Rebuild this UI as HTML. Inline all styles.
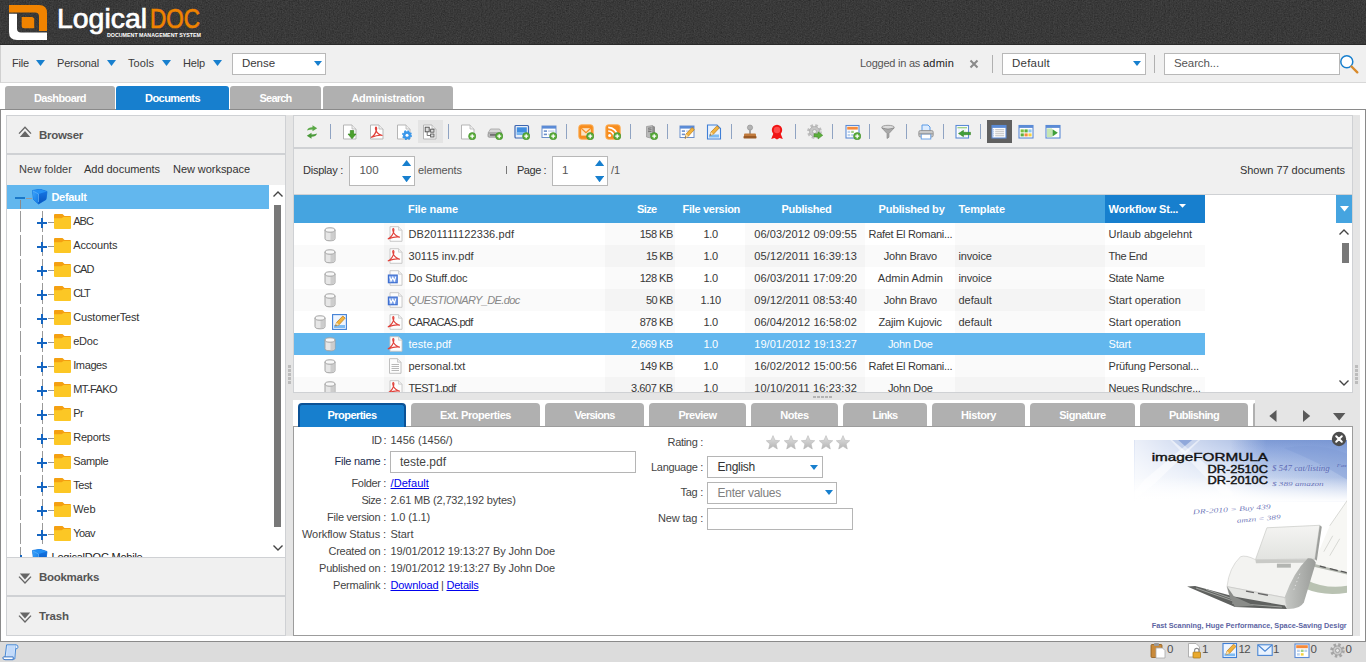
<!DOCTYPE html>
<html lang="en"><head><meta charset="utf-8"><title>LogicalDOC</title>
<style>
html,body{margin:0;padding:0;}
body{width:1366px;height:662px;overflow:hidden;background:#fff;position:relative;font-family:"Liberation Sans",sans-serif;font-size:11px;}
.a{position:absolute;box-sizing:border-box;display:block;}
.t{position:absolute;white-space:nowrap;line-height:16px;height:16px;}
a.t,.t a{color:#0000ee;text-decoration:underline;}
</style></head><body>
<div class="a" style="left:0px;top:0px;width:1366px;height:45px;background:#434343;border-bottom:1px solid #2a2a2a;"></div>
<svg class="a" style="left:0px;top:0px;" width="1366" height="44" viewBox="0 0 1366 44"><defs><filter id="hn" x="0" y="0" width="100%" height="100%"><feTurbulence type="fractalNoise" baseFrequency="0.75" numOctaves="2" seed="3" result="n"/><feColorMatrix type="matrix" values="0 0 0 0 0  0 0 0 0 0  0 0 0 0 0  0.9 0.9 0.9 0 -0.95"/></filter></defs><rect width="1366" height="44" filter="url(#hn)" opacity="0.35"/></svg>
<svg class="a" style="left:0px;top:0px;" width="220" height="45" viewBox="0 0 220 45">
<path d="M9 5 H39 Q47 5 47 13 V31 H39 V16.5 Q39 12.5 35 12.5 H9 Z" fill="#f08300"/>
<path d="M21.7 17 H31.7 Q34.2 17 34.2 19.5 V28.2 H24.2 Q21.7 28.2 21.7 25.7 Z" fill="#f08300"/>
<path d="M9 13.8 H17 V28.6 Q17 32.6 21 32.6 H47 V40 H17 Q9 40 9 32 Z" fill="#ffffff"/>
<text x="57" y="28" font-family="Liberation Sans, sans-serif" font-size="27" fill="#ffffff" stroke="#ffffff" stroke-width="0.7" textLength="90" lengthAdjust="spacingAndGlyphs">Logical</text>
<text x="150" y="28" font-family="Liberation Sans, sans-serif" font-size="27" fill="#f08300" stroke="#f08300" stroke-width="0.7" textLength="50" lengthAdjust="spacingAndGlyphs">DOC</text>
<text x="107" y="37" font-family="Liberation Sans, sans-serif" font-size="5" font-weight="bold" fill="#ffffff" textLength="94" lengthAdjust="spacingAndGlyphs">DOCUMENT MANAGEMENT SYSTEM</text>
</svg>
<div class="a" style="left:0px;top:45px;width:1366px;height:38px;background:#f0f0f0;border-bottom:1px solid #d8d8d8;border-left:1px solid #d0d0d0;"></div>
<div class="t" style="left:12.0px;top:55px;font-size:11px;color:#3a3a3a;letter-spacing:-0.18px;">File</div>
<svg class="a" style="left:35.5px;top:60px;" width="9" height="6" viewBox="0 0 9 6"><path d="M0 0 H9 L4.5 6 Z" fill="#177fce"/></svg>
<div class="t" style="left:57.0px;top:55px;font-size:11px;color:#3a3a3a;letter-spacing:-0.18px;">Personal</div>
<svg class="a" style="left:106.5px;top:60px;" width="9" height="6" viewBox="0 0 9 6"><path d="M0 0 H9 L4.5 6 Z" fill="#177fce"/></svg>
<div class="t" style="left:128.0px;top:55px;font-size:11px;color:#3a3a3a;letter-spacing:0.06px;">Tools</div>
<svg class="a" style="left:161.5px;top:60px;" width="9" height="6" viewBox="0 0 9 6"><path d="M0 0 H9 L4.5 6 Z" fill="#177fce"/></svg>
<div class="t" style="left:183.0px;top:55px;font-size:11px;color:#3a3a3a;letter-spacing:-0.16px;">Help</div>
<svg class="a" style="left:212.5px;top:60px;" width="9" height="6" viewBox="0 0 9 6"><path d="M0 0 H9 L4.5 6 Z" fill="#177fce"/></svg>
<div class="a" style="left:232px;top:53px;width:94px;height:22px;background:#fff;border:1px solid #b8b8b8;"></div>
<div class="t" style="left:242.0px;top:55px;font-size:11.5px;color:#3a3a3a;letter-spacing:-0.05px;">Dense</div>
<svg class="a" style="left:314px;top:60.5px;" width="8" height="5" viewBox="0 0 8 5"><path d="M0 0 H8 L4 5 Z" fill="#177fce"/></svg>
<div class="t" style="left:860.0px;top:55px;font-size:11px;color:#555;letter-spacing:-0.25px;">Logged in as</div>
<div class="t" style="left:923.0px;top:55px;font-size:11px;color:#222;letter-spacing:0.21px;">admin</div>
<svg class="a" style="left:969px;top:59px;" width="10" height="10" viewBox="0 0 10 10"><path d="M1.5 1.5 L8.5 8.5 M8.5 1.5 L1.5 8.5" stroke="#8a8a8a" stroke-width="2" fill="none"/></svg>
<div class="a" style="left:992px;top:55px;width:1px;height:18px;background:#b0b0b0;"></div>
<div class="a" style="left:1002px;top:53px;width:144px;height:22px;background:#fff;border:1px solid #b8b8b8;"></div>
<div class="t" style="left:1012.0px;top:55px;font-size:11.5px;color:#3a3a3a;letter-spacing:0.22px;">Default</div>
<svg class="a" style="left:1133px;top:60.5px;" width="8" height="5" viewBox="0 0 8 5"><path d="M0 0 H8 L4 5 Z" fill="#177fce"/></svg>
<div class="a" style="left:1154px;top:55px;width:1px;height:18px;background:#b0b0b0;"></div>
<div class="a" style="left:1164px;top:53px;width:176px;height:22px;background:#fff;border:1px solid #b8b8b8;"></div>
<div class="t" style="left:1174.0px;top:55px;font-size:11.5px;color:#555;letter-spacing:-0.11px;">Search...</div>
<svg class="a" style="left:1339px;top:54px;" width="22" height="22" viewBox="0 0 22 22"><circle cx="7.8" cy="7.8" r="6" fill="#fff" stroke="#177fce" stroke-width="1.5"/><path d="M12.5 12.5 L18.3 18.3" stroke="#d98a2b" stroke-width="2.4" stroke-linecap="round"/></svg>
<div class="a" style="left:0px;top:109px;width:1366px;height:533px;border:1px solid #8a8a8a;background:#fff;"></div>
<div class="a" style="left:0px;top:642px;width:1366px;height:20px;background:#dcdcdc;"></div>
<div class="a" style="left:5px;top:86px;width:110px;height:23px;background:#b0b0b0;border-radius:3px 3px 0 0;"></div>
<div class="t" style="left:34.0px;top:90px;font-size:11px;color:#fff;letter-spacing:-0.61px;font-weight:bold;">Dashboard</div>
<div class="a" style="left:116px;top:86px;width:113px;height:24px;background:#177fce;border-radius:3px 3px 0 0;"></div>
<div class="t" style="left:145.0px;top:90px;font-size:11px;color:#fff;letter-spacing:-0.54px;font-weight:bold;">Documents</div>
<div class="a" style="left:230px;top:86px;width:91px;height:23px;background:#b0b0b0;border-radius:3px 3px 0 0;"></div>
<div class="t" style="left:259.5px;top:90px;font-size:11px;color:#fff;letter-spacing:-0.78px;font-weight:bold;">Search</div>
<div class="a" style="left:323px;top:86px;width:130px;height:23px;background:#b0b0b0;border-radius:3px 3px 0 0;"></div>
<div class="t" style="left:351.5px;top:90px;font-size:11px;color:#fff;letter-spacing:-0.33px;font-weight:bold;">Administration</div>
<div class="a" style="left:286px;top:115px;width:7px;height:521px;background:#e5e5e5;"></div>
<div class="a" style="left:1353px;top:115px;width:7px;height:521px;background:#e5e5e5;"></div>
<div class="a" style="left:288px;top:365px;width:3px;height:3px;background:#bcbcbc;"></div>
<div class="a" style="left:288px;top:369px;width:3px;height:3px;background:#bcbcbc;"></div>
<div class="a" style="left:288px;top:373px;width:3px;height:3px;background:#bcbcbc;"></div>
<div class="a" style="left:288px;top:377px;width:3px;height:3px;background:#bcbcbc;"></div>
<div class="a" style="left:288px;top:381px;width:3px;height:3px;background:#bcbcbc;"></div>
<div class="a" style="left:1355px;top:365px;width:3px;height:3px;background:#bcbcbc;"></div>
<div class="a" style="left:1355px;top:369px;width:3px;height:3px;background:#bcbcbc;"></div>
<div class="a" style="left:1355px;top:373px;width:3px;height:3px;background:#bcbcbc;"></div>
<div class="a" style="left:1355px;top:377px;width:3px;height:3px;background:#bcbcbc;"></div>
<div class="a" style="left:1355px;top:381px;width:3px;height:3px;background:#bcbcbc;"></div>
<div class="a" style="left:7px;top:185px;width:279px;height:372px;background:#fff;"></div>
<div class="a" style="left:7px;top:185px;width:262px;height:24px;background:#62b7ee;"></div>
<div class="a" style="left:269px;top:185px;width:17px;height:372px;background:#fff;border-right:1px solid #cfd1d4;"></div>
<div class="a" style="left:274px;top:205px;width:7px;height:322px;background:#787878;"></div>
<svg class="a" style="left:272px;top:190px;" width="12" height="8" viewBox="0 0 12 8"><path d="M1.5 6.5 L6 2 L10.5 6.5" fill="none" stroke="#444" stroke-width="1.4"/></svg>
<svg class="a" style="left:272px;top:544px;" width="12" height="8" viewBox="0 0 12 8"><path d="M1.5 1.5 L6 6 L10.5 1.5" fill="none" stroke="#444" stroke-width="1.4"/></svg>
<div class="a" style="left:20px;top:211px;width:1px;height:21px;background:#9a9a9a;"></div>
<div class="a" style="left:42px;top:211px;width:1px;height:21px;background:#9a9a9a;"></div>
<div class="a" style="left:20px;top:235px;width:1px;height:21px;background:#9a9a9a;"></div>
<div class="a" style="left:42px;top:235px;width:1px;height:21px;background:#9a9a9a;"></div>
<div class="a" style="left:20px;top:259px;width:1px;height:21px;background:#9a9a9a;"></div>
<div class="a" style="left:42px;top:259px;width:1px;height:21px;background:#9a9a9a;"></div>
<div class="a" style="left:20px;top:283px;width:1px;height:21px;background:#9a9a9a;"></div>
<div class="a" style="left:42px;top:283px;width:1px;height:21px;background:#9a9a9a;"></div>
<div class="a" style="left:20px;top:307px;width:1px;height:21px;background:#9a9a9a;"></div>
<div class="a" style="left:42px;top:307px;width:1px;height:21px;background:#9a9a9a;"></div>
<div class="a" style="left:20px;top:331px;width:1px;height:21px;background:#9a9a9a;"></div>
<div class="a" style="left:42px;top:331px;width:1px;height:21px;background:#9a9a9a;"></div>
<div class="a" style="left:20px;top:355px;width:1px;height:21px;background:#9a9a9a;"></div>
<div class="a" style="left:42px;top:355px;width:1px;height:21px;background:#9a9a9a;"></div>
<div class="a" style="left:20px;top:379px;width:1px;height:21px;background:#9a9a9a;"></div>
<div class="a" style="left:42px;top:379px;width:1px;height:21px;background:#9a9a9a;"></div>
<div class="a" style="left:20px;top:403px;width:1px;height:21px;background:#9a9a9a;"></div>
<div class="a" style="left:42px;top:403px;width:1px;height:21px;background:#9a9a9a;"></div>
<div class="a" style="left:20px;top:427px;width:1px;height:21px;background:#9a9a9a;"></div>
<div class="a" style="left:42px;top:427px;width:1px;height:21px;background:#9a9a9a;"></div>
<div class="a" style="left:20px;top:451px;width:1px;height:21px;background:#9a9a9a;"></div>
<div class="a" style="left:42px;top:451px;width:1px;height:21px;background:#9a9a9a;"></div>
<div class="a" style="left:20px;top:475px;width:1px;height:21px;background:#9a9a9a;"></div>
<div class="a" style="left:42px;top:475px;width:1px;height:21px;background:#9a9a9a;"></div>
<div class="a" style="left:20px;top:499px;width:1px;height:21px;background:#9a9a9a;"></div>
<div class="a" style="left:42px;top:499px;width:1px;height:21px;background:#9a9a9a;"></div>
<div class="a" style="left:20px;top:523px;width:1px;height:21px;background:#9a9a9a;"></div>
<div class="a" style="left:42px;top:523px;width:1px;height:21px;background:#9a9a9a;"></div>
<div class="a" style="left:20px;top:547px;width:1px;height:21px;background:#9a9a9a;"></div>
<div class="a" style="left:20px;top:200px;width:1px;height:9px;background:#8a8a8a;"></div>
<div class="a" style="left:15px;top:197px;width:10px;height:2px;background:#1a78c8;"></div>
<div class="a" style="left:26px;top:197.5px;width:6px;height:1px;background:#9a9a9a;"></div>
<svg class="a" style="left:32px;top:189px;" width="16" height="16" viewBox="0 0 16 16"><defs><linearGradient id="cl413" x1="0" y1="0" x2="1" y2="1"><stop offset="0" stop-color="#3da4fb"/><stop offset="1" stop-color="#1178e4"/></linearGradient><linearGradient id="cr413" x1="0" y1="0" x2="0" y2="1"><stop offset="0" stop-color="#1474e2"/><stop offset="1" stop-color="#0755bf"/></linearGradient></defs><path d="M0.5 1.5 L8 0.3 L15 2.5 L14 10.5 L6.5 15 L1.5 10.5 Z" fill="#0e6fdc" stroke="#0e6fdc" stroke-width="0.8" stroke-linejoin="round"/><path d="M0.5 1.5 L6.5 5 L6.5 15 L1.5 10.5 Z" fill="url(#cl413)"/><path d="M6.5 5 L15 2.5 L14 10.5 L6.5 15 Z" fill="url(#cr413)"/><path d="M0.5 1.5 L8 0.3 L15 2.5 L6.5 5 Z" fill="#2490f4"/><path d="M0.8 1.8 L6.5 5 V13" fill="none" stroke="#7cc6ff" stroke-width="0.7" opacity="0.8"/></svg>
<div class="t" style="left:51.5px;top:189px;font-size:11px;color:#fff;letter-spacing:-0.33px;font-weight:bold;">Default</div>
<div class="a" style="left:37px;top:221.5px;width:10px;height:2px;background:#1565c0;"></div>
<div class="a" style="left:41px;top:217.5px;width:2px;height:10px;background:#1565c0;"></div>
<div class="a" style="left:48px;top:222px;width:6px;height:1px;background:#9a9a9a;"></div>
<svg class="a" style="left:53.5px;top:214px;" width="17" height="15" viewBox="0 0 17 15"><path d="M0 1 Q0 0 1 0 H8.5 L10.5 2 H16 Q17 2 17 3 V5 H0 Z" fill="#f4a011"/><path d="M0 4.2 H7.5 L9.5 3 H17 V14 Q17 15 16 15 H1 Q0 15 0 14 Z" fill="#fcc725"/></svg>
<div class="t" style="left:73.2px;top:213px;font-size:11px;color:#333;letter-spacing:-0.97px;">ABC</div>
<div class="a" style="left:37px;top:245.5px;width:10px;height:2px;background:#1565c0;"></div>
<div class="a" style="left:41px;top:241.5px;width:2px;height:10px;background:#1565c0;"></div>
<div class="a" style="left:48px;top:246px;width:6px;height:1px;background:#9a9a9a;"></div>
<svg class="a" style="left:53.5px;top:238px;" width="17" height="15" viewBox="0 0 17 15"><path d="M0 1 Q0 0 1 0 H8.5 L10.5 2 H16 Q17 2 17 3 V5 H0 Z" fill="#f4a011"/><path d="M0 4.2 H7.5 L9.5 3 H17 V14 Q17 15 16 15 H1 Q0 15 0 14 Z" fill="#fcc725"/></svg>
<div class="t" style="left:73.2px;top:237px;font-size:11px;color:#333;letter-spacing:-0.14px;">Accounts</div>
<div class="a" style="left:37px;top:269.5px;width:10px;height:2px;background:#1565c0;"></div>
<div class="a" style="left:41px;top:265.5px;width:2px;height:10px;background:#1565c0;"></div>
<div class="a" style="left:48px;top:270px;width:6px;height:1px;background:#9a9a9a;"></div>
<svg class="a" style="left:53.5px;top:262px;" width="17" height="15" viewBox="0 0 17 15"><path d="M0 1 Q0 0 1 0 H8.5 L10.5 2 H16 Q17 2 17 3 V5 H0 Z" fill="#f4a011"/><path d="M0 4.2 H7.5 L9.5 3 H17 V14 Q17 15 16 15 H1 Q0 15 0 14 Z" fill="#fcc725"/></svg>
<div class="t" style="left:73.2px;top:261px;font-size:11px;color:#333;letter-spacing:-1.01px;">CAD</div>
<div class="a" style="left:37px;top:293.5px;width:10px;height:2px;background:#1565c0;"></div>
<div class="a" style="left:41px;top:289.5px;width:2px;height:10px;background:#1565c0;"></div>
<div class="a" style="left:48px;top:294px;width:6px;height:1px;background:#9a9a9a;"></div>
<svg class="a" style="left:53.5px;top:286px;" width="17" height="15" viewBox="0 0 17 15"><path d="M0 1 Q0 0 1 0 H8.5 L10.5 2 H16 Q17 2 17 3 V5 H0 Z" fill="#f4a011"/><path d="M0 4.2 H7.5 L9.5 3 H17 V14 Q17 15 16 15 H1 Q0 15 0 14 Z" fill="#fcc725"/></svg>
<div class="t" style="left:73.2px;top:285px;font-size:11px;color:#333;letter-spacing:-1.19px;">CLT</div>
<div class="a" style="left:37px;top:317.5px;width:10px;height:2px;background:#1565c0;"></div>
<div class="a" style="left:41px;top:313.5px;width:2px;height:10px;background:#1565c0;"></div>
<div class="a" style="left:48px;top:318px;width:6px;height:1px;background:#9a9a9a;"></div>
<svg class="a" style="left:53.5px;top:310px;" width="17" height="15" viewBox="0 0 17 15"><path d="M0 1 Q0 0 1 0 H8.5 L10.5 2 H16 Q17 2 17 3 V5 H0 Z" fill="#f4a011"/><path d="M0 4.2 H7.5 L9.5 3 H17 V14 Q17 15 16 15 H1 Q0 15 0 14 Z" fill="#fcc725"/></svg>
<div class="t" style="left:73.2px;top:309px;font-size:11px;color:#333;letter-spacing:-0.15px;">CustomerTest</div>
<div class="a" style="left:37px;top:341.5px;width:10px;height:2px;background:#1565c0;"></div>
<div class="a" style="left:41px;top:337.5px;width:2px;height:10px;background:#1565c0;"></div>
<div class="a" style="left:48px;top:342px;width:6px;height:1px;background:#9a9a9a;"></div>
<svg class="a" style="left:53.5px;top:334px;" width="17" height="15" viewBox="0 0 17 15"><path d="M0 1 Q0 0 1 0 H8.5 L10.5 2 H16 Q17 2 17 3 V5 H0 Z" fill="#f4a011"/><path d="M0 4.2 H7.5 L9.5 3 H17 V14 Q17 15 16 15 H1 Q0 15 0 14 Z" fill="#fcc725"/></svg>
<div class="t" style="left:73.2px;top:333px;font-size:11px;color:#333;letter-spacing:-0.22px;">eDoc</div>
<div class="a" style="left:37px;top:365.5px;width:10px;height:2px;background:#1565c0;"></div>
<div class="a" style="left:41px;top:361.5px;width:2px;height:10px;background:#1565c0;"></div>
<div class="a" style="left:48px;top:366px;width:6px;height:1px;background:#9a9a9a;"></div>
<svg class="a" style="left:53.5px;top:358px;" width="17" height="15" viewBox="0 0 17 15"><path d="M0 1 Q0 0 1 0 H8.5 L10.5 2 H16 Q17 2 17 3 V5 H0 Z" fill="#f4a011"/><path d="M0 4.2 H7.5 L9.5 3 H17 V14 Q17 15 16 15 H1 Q0 15 0 14 Z" fill="#fcc725"/></svg>
<div class="t" style="left:73.2px;top:357px;font-size:11px;color:#333;letter-spacing:-0.38px;">Images</div>
<div class="a" style="left:37px;top:389.5px;width:10px;height:2px;background:#1565c0;"></div>
<div class="a" style="left:41px;top:385.5px;width:2px;height:10px;background:#1565c0;"></div>
<div class="a" style="left:48px;top:390px;width:6px;height:1px;background:#9a9a9a;"></div>
<svg class="a" style="left:53.5px;top:382px;" width="17" height="15" viewBox="0 0 17 15"><path d="M0 1 Q0 0 1 0 H8.5 L10.5 2 H16 Q17 2 17 3 V5 H0 Z" fill="#f4a011"/><path d="M0 4.2 H7.5 L9.5 3 H17 V14 Q17 15 16 15 H1 Q0 15 0 14 Z" fill="#fcc725"/></svg>
<div class="t" style="left:73.2px;top:381px;font-size:11px;color:#333;letter-spacing:-0.67px;">MT-FAKO</div>
<div class="a" style="left:37px;top:413.5px;width:10px;height:2px;background:#1565c0;"></div>
<div class="a" style="left:41px;top:409.5px;width:2px;height:10px;background:#1565c0;"></div>
<div class="a" style="left:48px;top:414px;width:6px;height:1px;background:#9a9a9a;"></div>
<svg class="a" style="left:53.5px;top:406px;" width="17" height="15" viewBox="0 0 17 15"><path d="M0 1 Q0 0 1 0 H8.5 L10.5 2 H16 Q17 2 17 3 V5 H0 Z" fill="#f4a011"/><path d="M0 4.2 H7.5 L9.5 3 H17 V14 Q17 15 16 15 H1 Q0 15 0 14 Z" fill="#fcc725"/></svg>
<div class="t" style="left:73.2px;top:405px;font-size:11px;color:#333;letter-spacing:-0.50px;">Pr</div>
<div class="a" style="left:37px;top:437.5px;width:10px;height:2px;background:#1565c0;"></div>
<div class="a" style="left:41px;top:433.5px;width:2px;height:10px;background:#1565c0;"></div>
<div class="a" style="left:48px;top:438px;width:6px;height:1px;background:#9a9a9a;"></div>
<svg class="a" style="left:53.5px;top:430px;" width="17" height="15" viewBox="0 0 17 15"><path d="M0 1 Q0 0 1 0 H8.5 L10.5 2 H16 Q17 2 17 3 V5 H0 Z" fill="#f4a011"/><path d="M0 4.2 H7.5 L9.5 3 H17 V14 Q17 15 16 15 H1 Q0 15 0 14 Z" fill="#fcc725"/></svg>
<div class="t" style="left:73.2px;top:429px;font-size:11px;color:#333;letter-spacing:-0.23px;">Reports</div>
<div class="a" style="left:37px;top:461.5px;width:10px;height:2px;background:#1565c0;"></div>
<div class="a" style="left:41px;top:457.5px;width:2px;height:10px;background:#1565c0;"></div>
<div class="a" style="left:48px;top:462px;width:6px;height:1px;background:#9a9a9a;"></div>
<svg class="a" style="left:53.5px;top:454px;" width="17" height="15" viewBox="0 0 17 15"><path d="M0 1 Q0 0 1 0 H8.5 L10.5 2 H16 Q17 2 17 3 V5 H0 Z" fill="#f4a011"/><path d="M0 4.2 H7.5 L9.5 3 H17 V14 Q17 15 16 15 H1 Q0 15 0 14 Z" fill="#fcc725"/></svg>
<div class="t" style="left:73.2px;top:453px;font-size:11px;color:#333;letter-spacing:-0.37px;">Sample</div>
<div class="a" style="left:37px;top:485.5px;width:10px;height:2px;background:#1565c0;"></div>
<div class="a" style="left:41px;top:481.5px;width:2px;height:10px;background:#1565c0;"></div>
<div class="a" style="left:48px;top:486px;width:6px;height:1px;background:#9a9a9a;"></div>
<svg class="a" style="left:53.5px;top:478px;" width="17" height="15" viewBox="0 0 17 15"><path d="M0 1 Q0 0 1 0 H8.5 L10.5 2 H16 Q17 2 17 3 V5 H0 Z" fill="#f4a011"/><path d="M0 4.2 H7.5 L9.5 3 H17 V14 Q17 15 16 15 H1 Q0 15 0 14 Z" fill="#fcc725"/></svg>
<div class="t" style="left:73.2px;top:477px;font-size:11px;color:#333;letter-spacing:-0.44px;">Test</div>
<div class="a" style="left:37px;top:509.5px;width:10px;height:2px;background:#1565c0;"></div>
<div class="a" style="left:41px;top:505.5px;width:2px;height:10px;background:#1565c0;"></div>
<div class="a" style="left:48px;top:510px;width:6px;height:1px;background:#9a9a9a;"></div>
<svg class="a" style="left:53.5px;top:502px;" width="17" height="15" viewBox="0 0 17 15"><path d="M0 1 Q0 0 1 0 H8.5 L10.5 2 H16 Q17 2 17 3 V5 H0 Z" fill="#f4a011"/><path d="M0 4.2 H7.5 L9.5 3 H17 V14 Q17 15 16 15 H1 Q0 15 0 14 Z" fill="#fcc725"/></svg>
<div class="t" style="left:73.2px;top:501px;font-size:11px;color:#333;letter-spacing:-0.04px;">Web</div>
<div class="a" style="left:37px;top:533.5px;width:10px;height:2px;background:#1565c0;"></div>
<div class="a" style="left:41px;top:529.5px;width:2px;height:10px;background:#1565c0;"></div>
<div class="a" style="left:48px;top:534px;width:6px;height:1px;background:#9a9a9a;"></div>
<svg class="a" style="left:53.5px;top:526px;" width="17" height="15" viewBox="0 0 17 15"><path d="M0 1 Q0 0 1 0 H8.5 L10.5 2 H16 Q17 2 17 3 V5 H0 Z" fill="#f4a011"/><path d="M0 4.2 H7.5 L9.5 3 H17 V14 Q17 15 16 15 H1 Q0 15 0 14 Z" fill="#fcc725"/></svg>
<div class="t" style="left:73.2px;top:525px;font-size:11px;color:#333;letter-spacing:-0.57px;">Yoav</div>
<div class="a" style="left:20px;top:555px;width:2px;height:2px;background:#1565c0;"></div>
<svg class="a" style="left:32px;top:549px;" width="16" height="16" viewBox="0 0 16 16"><defs><linearGradient id="cl773" x1="0" y1="0" x2="1" y2="1"><stop offset="0" stop-color="#3da4fb"/><stop offset="1" stop-color="#1178e4"/></linearGradient><linearGradient id="cr773" x1="0" y1="0" x2="0" y2="1"><stop offset="0" stop-color="#1474e2"/><stop offset="1" stop-color="#0755bf"/></linearGradient></defs><path d="M0.5 1.5 L8 0.3 L15 2.5 L14 10.5 L6.5 15 L1.5 10.5 Z" fill="#0e6fdc" stroke="#0e6fdc" stroke-width="0.8" stroke-linejoin="round"/><path d="M0.5 1.5 L6.5 5 L6.5 15 L1.5 10.5 Z" fill="url(#cl773)"/><path d="M6.5 5 L15 2.5 L14 10.5 L6.5 15 Z" fill="url(#cr773)"/><path d="M0.5 1.5 L8 0.3 L15 2.5 L6.5 5 Z" fill="#2490f4"/><path d="M0.8 1.8 L6.5 5 V13" fill="none" stroke="#7cc6ff" stroke-width="0.7" opacity="0.8"/></svg>
<div class="t" style="left:51.5px;top:549px;font-size:11px;color:#222;letter-spacing:-0.22px;">LogicalDOC Mobile</div>
<div class="a" style="left:6px;top:115px;width:280px;height:39px;background:#f0f0f0;border:1px solid #cfd1d4;"></div>
<svg class="a" style="left:18px;top:125.8px;" width="14" height="12" viewBox="0 0 14 12"><path d="M1 7.6 L7 1.2 L13 7.6" fill="none" stroke="#666" stroke-width="1.3"/><path d="M1.8 11 L7 5 L12.2 11 Z" fill="#666"/></svg>
<div class="t" style="left:39.0px;top:127px;font-size:11.5px;color:#555;letter-spacing:-0.29px;font-weight:bold;">Browser</div>
<div class="a" style="left:6px;top:557px;width:280px;height:39px;background:#f0f0f0;border:1px solid #cfd1d4;"></div>
<svg class="a" style="left:18px;top:571.5px;" width="14" height="13" viewBox="0 0 14 13"><path d="M1.8 1.6 L7 7.5 L12.2 1.6 Z" fill="#666"/><path d="M1 4.6 L7 11 L13 4.6" fill="none" stroke="#666" stroke-width="1.3"/></svg>
<div class="t" style="left:39.0px;top:569px;font-size:11.5px;color:#555;letter-spacing:-0.29px;font-weight:bold;">Bookmarks</div>
<div class="a" style="left:6px;top:596px;width:280px;height:40px;background:#f0f0f0;border:1px solid #cfd1d4;"></div>
<svg class="a" style="left:18px;top:611px;" width="14" height="13" viewBox="0 0 14 13"><path d="M1.8 1.6 L7 7.5 L12.2 1.6 Z" fill="#666"/><path d="M1 4.6 L7 11 L13 4.6" fill="none" stroke="#666" stroke-width="1.3"/></svg>
<div class="t" style="left:39.0px;top:608px;font-size:11.5px;color:#555;letter-spacing:-0.14px;font-weight:bold;">Trash</div>
<div class="a" style="left:6px;top:154px;width:280px;height:31px;background:#f0f0f0;border:1px solid #cfd1d4;border-bottom:none;"></div>
<div class="a" style="left:6px;top:185px;width:1px;height:372px;background:#cfd1d4;"></div>
<div class="t" style="left:19.0px;top:161px;font-size:11px;color:#404040;letter-spacing:0.04px;">New folder</div>
<div class="t" style="left:84.0px;top:161px;font-size:11px;color:#333;letter-spacing:-0.03px;">Add documents</div>
<div class="t" style="left:173.0px;top:161px;font-size:11px;color:#333;letter-spacing:-0.05px;">New workspace</div>
<div class="a" style="left:293px;top:115px;width:1060px;height:33px;background:#f0f0f0;border:1px solid #cfd1d4;"></div>
<div class="a" style="left:293px;top:148px;width:1060px;height:47px;background:#f0f0f0;border:1px solid #cfd1d4;"></div>
<div class="a" style="left:330px;top:124px;width:1px;height:15px;background:#8fa3c2;"></div>
<div class="a" style="left:448px;top:124px;width:1px;height:15px;background:#8fa3c2;"></div>
<div class="a" style="left:566px;top:124px;width:1px;height:15px;background:#8fa3c2;"></div>
<div class="a" style="left:630px;top:124px;width:1px;height:15px;background:#8fa3c2;"></div>
<div class="a" style="left:667px;top:124px;width:1px;height:15px;background:#8fa3c2;"></div>
<div class="a" style="left:731px;top:124px;width:1px;height:15px;background:#8fa3c2;"></div>
<div class="a" style="left:795px;top:124px;width:1px;height:15px;background:#8fa3c2;"></div>
<div class="a" style="left:832px;top:124px;width:1px;height:15px;background:#8fa3c2;"></div>
<div class="a" style="left:869px;top:124px;width:1px;height:15px;background:#8fa3c2;"></div>
<div class="a" style="left:906px;top:124px;width:1px;height:15px;background:#8fa3c2;"></div>
<div class="a" style="left:943px;top:124px;width:1px;height:15px;background:#8fa3c2;"></div>
<div class="a" style="left:980px;top:124px;width:1px;height:15px;background:#8fa3c2;"></div>
<div class="a" style="left:418px;top:120px;width:25px;height:23px;background:#e4e4e4;"></div>
<div class="a" style="left:987px;top:120px;width:25px;height:23px;background:#606060;"></div>
<svg class="a" style="left:304px;top:123.5px;" width="16" height="16" viewBox="0 0 16 16"><path d="M3 6.5 Q4 3.2 8.5 3.2 V1.3 L13.2 4.3 L8.5 7.3 V5.4 Q5.5 5.4 3 6.5 Z" fill="#5aa846"/><path d="M13 9.5 Q12 12.8 7.5 12.8 V14.7 L2.8 11.7 L7.5 8.7 V10.6 Q10.5 10.6 13 9.5 Z" fill="#4a9a3a"/></svg>
<svg class="a" style="left:342px;top:123.5px;" width="16" height="16" viewBox="0 0 16 16"><path d="M1.5 1 H10 L14 5 V15 H1.5 Z" fill="#fff" stroke="#b5b5b5" stroke-width="1"/><path d="M10 1 V5 H14" fill="#eee" stroke="#b5b5b5" stroke-width="0.8"/><path d="M8.3 6.5 H11.7 V10 H14 L10 14.8 L6 10 H8.3 Z" fill="#4aa02c" stroke="#2e7d1a" stroke-width="0.6"/></svg>
<svg class="a" style="left:369px;top:123.5px;" width="16" height="16" viewBox="0 0 16 16"><path d="M1.5 1 H10 L14 5 V15 H1.5 Z" fill="#fff" stroke="#b5b5b5" stroke-width="1"/><path d="M10 1 V5 H14" fill="#eee" stroke="#b5b5b5" stroke-width="0.8"/><path d="M2 13.5 Q6 11.5 7.3 6.5 Q8 3.2 7 3 Q5.8 3.4 7.2 7 Q9 10.6 13.5 11.5 Q10 10.5 2 13.5 Z" fill="none" stroke="#e0413a" stroke-width="1.25"/></svg>
<svg class="a" style="left:396px;top:123.5px;" width="16" height="16" viewBox="0 0 16 16"><path d="M1.5 1 H10 L14 5 V15 H1.5 Z" fill="#fff" stroke="#b5b5b5" stroke-width="1"/><path d="M10 1 V5 H14" fill="#eee" stroke="#b5b5b5" stroke-width="0.8"/><circle cx="11" cy="11.2" r="3.9" fill="#3a97ea"/><circle cx="11" cy="11.2" r="4.2" fill="none" stroke="#3a97ea" stroke-width="1.6" stroke-dasharray="1.7 1.6"/><circle cx="11" cy="11.2" r="1.5" fill="#fff"/></svg>
<svg class="a" style="left:422px;top:123.5px;" width="16" height="16" viewBox="0 0 16 16"><path d="M1.5 1 H10 L14 5 V15 H1.5 Z" fill="#fff" stroke="#b5b5b5" stroke-width="1"/><path d="M10 1 V5 H14" fill="#eee" stroke="#b5b5b5" stroke-width="0.8"/><rect x="3.2" y="3.2" width="4" height="4.6" fill="#ddd" stroke="#555" stroke-width="1"/><rect x="8.6" y="5.2" width="3.4" height="3" fill="#ddd" stroke="#555" stroke-width="0.9"/><rect x="8.6" y="10" width="3.4" height="3" fill="#ddd" stroke="#555" stroke-width="0.9"/><path d="M5.2 7.8 V11.5 H8.6" fill="none" stroke="#666" stroke-width="0.9"/></svg>
<svg class="a" style="left:460px;top:123.5px;" width="16" height="16" viewBox="0 0 16 16"><path d="M1.5 1 H10 L14 5 V15 H1.5 Z" fill="#fff" stroke="#b5b5b5" stroke-width="1"/><path d="M10 1 V5 H14" fill="#eee" stroke="#b5b5b5" stroke-width="0.8"/><circle cx="12.2" cy="12.2" r="3.6" fill="#5cae3c" stroke="#3d8b27" stroke-width="0.6"/><path d="M10.2 12.2 H14.2 M12.2 10.2 V14.2" stroke="#fff" stroke-width="1.3"/></svg>
<svg class="a" style="left:487px;top:123.5px;" width="16" height="16" viewBox="0 0 16 16"><path d="M3.5 5 H12.5 L15 9 H1 Z" fill="#d8d8d8" stroke="#9a9a9a" stroke-width="0.7"/><rect x="1" y="9" width="14" height="4.2" rx="1" fill="#bdbdbd" stroke="#8a8a8a" stroke-width="0.7"/><rect x="3" y="10.3" width="8" height="1.3" fill="#555"/><circle cx="12.2" cy="12.2" r="3.6" fill="#5cae3c" stroke="#3d8b27" stroke-width="0.6"/><path d="M10.2 12.2 H14.2 M12.2 10.2 V14.2" stroke="#fff" stroke-width="1.3"/></svg>
<svg class="a" style="left:514px;top:123.5px;" width="16" height="16" viewBox="0 0 16 16"><rect x="1" y="1.5" width="13.5" height="12.5" rx="1" fill="#e8eef8" stroke="#3d66b0" stroke-width="1.2"/><rect x="2.8" y="3.3" width="10" height="7.5" fill="#3f8de0"/><rect x="2.8" y="8" width="10" height="2.8" fill="#7ab8f2"/><circle cx="12.2" cy="12.2" r="3.6" fill="#5cae3c" stroke="#3d8b27" stroke-width="0.6"/><path d="M10.2 12.2 H14.2 M12.2 10.2 V14.2" stroke="#fff" stroke-width="1.3"/></svg>
<svg class="a" style="left:541px;top:123.5px;" width="16" height="16" viewBox="0 0 16 16"><rect x="1" y="2" width="14" height="11.5" fill="#fff" stroke="#6b8fcb" stroke-width="1"/><rect x="1" y="2" width="14" height="2.6" fill="#5b8bd6"/><rect x="2.8" y="6.3" width="3.2" height="1.6" fill="#6b8fcb"/><rect x="7" y="6.3" width="6.4" height="1.6" fill="#c9d6ee"/><rect x="2.8" y="9.6" width="3.2" height="1.6" fill="#6b8fcb"/><rect x="7" y="9.6" width="4" height="1.6" fill="#c9d6ee"/><circle cx="12.2" cy="12.2" r="3.6" fill="#5cae3c" stroke="#3d8b27" stroke-width="0.6"/><path d="M10.2 12.2 H14.2 M12.2 10.2 V14.2" stroke="#fff" stroke-width="1.3"/></svg>
<svg class="a" style="left:578px;top:123.5px;" width="16" height="16" viewBox="0 0 16 16"><rect x="0.8" y="0.8" width="14.4" height="14.4" rx="2.6" fill="#f78d1e" stroke="#fbb05a" stroke-width="1"/><rect x="3.2" y="4.2" width="9.6" height="7.4" fill="#fde3c4"/><path d="M3.2 4.2 L8 8.6 L12.8 4.2" fill="none" stroke="#f78d1e" stroke-width="1.2"/><circle cx="12.2" cy="12.2" r="3.6" fill="#5cae3c" stroke="#3d8b27" stroke-width="0.6"/><path d="M10.2 12.2 H14.2 M12.2 10.2 V14.2" stroke="#fff" stroke-width="1.3"/></svg>
<svg class="a" style="left:605px;top:123.5px;" width="16" height="16" viewBox="0 0 16 16"><rect x="0.8" y="0.8" width="14.4" height="14.4" rx="2.6" fill="#f78d1e" stroke="#fbb05a" stroke-width="1"/><circle cx="4.6" cy="11.4" r="1.5" fill="#fff"/><path d="M3.2 7 A5.8 5.8 0 0 1 9 12.8" fill="none" stroke="#fff" stroke-width="1.7"/><path d="M3.2 3.4 A9.4 9.4 0 0 1 12.6 12.8" fill="none" stroke="#fff" stroke-width="1.7"/><circle cx="12.2" cy="12.2" r="3.6" fill="#5cae3c" stroke="#3d8b27" stroke-width="0.6"/><path d="M10.2 12.2 H14.2 M12.2 10.2 V14.2" stroke="#fff" stroke-width="1.3"/></svg>
<svg class="a" style="left:642px;top:123.5px;" width="16" height="16" viewBox="0 0 16 16"><path d="M4.5 2.5 L10.5 1.5 V14.5 L4.5 13 Z" fill="#b9b9b9" stroke="#8a8a8a" stroke-width="0.6"/><path d="M10.5 1.5 L13 2.8 V13.2 L10.5 14.5 Z" fill="#8e8e8e"/><path d="M6 4.3 L9.5 3.8 M6 6 L9.5 5.6 M6 7.7 L9.5 7.4" stroke="#666" stroke-width="0.8"/><circle cx="8.6" cy="10" r="0.8" fill="#3fae35"/><circle cx="12.2" cy="12.2" r="3.6" fill="#5cae3c" stroke="#3d8b27" stroke-width="0.6"/><path d="M10.2 12.2 H14.2 M12.2 10.2 V14.2" stroke="#fff" stroke-width="1.3"/></svg>
<svg class="a" style="left:679px;top:123.5px;" width="16" height="16" viewBox="0 0 16 16"><rect x="1" y="2" width="14" height="11.5" fill="#fff" stroke="#6b8fcb" stroke-width="1"/><rect x="1" y="2" width="14" height="2.6" fill="#5b8bd6"/><rect x="2.8" y="6.3" width="3.2" height="1.6" fill="#6b8fcb"/><rect x="7" y="6.3" width="6.4" height="1.6" fill="#c9d6ee"/><rect x="2.8" y="9.6" width="3.2" height="1.6" fill="#6b8fcb"/><path d="M6 14.5 L7 10 L13 3.5 L15.3 5.6 L9.3 12.3 Z" fill="#f2b33d" stroke="#b97a1a" stroke-width="0.7"/><path d="M6 14.5 L7 10 L9.3 12.3 Z" fill="#f7e2b8"/><path d="M6 14.5 L6.5 12 L7.3 12.9 Z" fill="#444"/></svg>
<svg class="a" style="left:706px;top:123.5px;" width="16" height="16" viewBox="0 0 16 16"><path d="M1.5 1 H11 L14.5 4.5 V15 H1.5 Z" fill="#e9f2fd" stroke="#3f7fd6" stroke-width="1.1"/><rect x="3" y="10.5" width="10" height="3" fill="#7dbbf3"/><path d="M4 11.5 L5 8 L11 1.8 L13.3 3.9 L7.3 10.3 Z" fill="#f2b33d" stroke="#b97a1a" stroke-width="0.7"/><path d="M4 11.5 L5 8 L7.3 10.3 Z" fill="#f7e2b8"/><path d="M4 11.5 L4.5 10 L5.3 10.9 Z" fill="#444"/></svg>
<svg class="a" style="left:742px;top:123.5px;" width="16" height="16" viewBox="0 0 16 16"><circle cx="8" cy="3.6" r="2.6" fill="#b3b3b3" stroke="#8d8d8d" stroke-width="0.6"/><rect x="7" y="5.5" width="2" height="5" fill="#a4a4a4"/><path d="M2 10.5 Q2 9.5 3 9.5 H13 Q14 9.5 14 10.5 V12.2 H2 Z" fill="#c07a3c"/><rect x="1.5" y="12" width="13" height="2.6" rx="0.8" fill="#9a5a25"/></svg>
<svg class="a" style="left:769px;top:123.5px;" width="16" height="16" viewBox="0 0 16 16"><path d="M4.6 9 L2.2 15 L5.4 14 L8 15.4 L10.6 14 L13.8 15 L11.4 9 Z" fill="#f01414"/><circle cx="8" cy="6" r="5.2" fill="#f01414"/><circle cx="8" cy="6" r="3.2" fill="#ff4a4a"/></svg>
<svg class="a" style="left:807px;top:123.5px;" width="16" height="16" viewBox="0 0 16 16"><circle cx="7.5" cy="7.5" r="5.6" fill="none" stroke="#bdbdbd" stroke-width="3.6" stroke-dasharray="2.4 2"/><circle cx="7.5" cy="7.5" r="5" fill="#c6c6c6" stroke="#a8a8a8" stroke-width="0.7"/><circle cx="7.5" cy="7.5" r="2" fill="#ececec" stroke="#9a9a9a" stroke-width="0.6"/><path d="M7 9.8 H11 V7.8 L15.8 11.3 L11 15 V13 H7 Z" fill="#5cae3c" stroke="#3d8b27" stroke-width="0.5"/></svg>
<svg class="a" style="left:845px;top:123.5px;" width="16" height="16" viewBox="0 0 16 16"><rect x="1" y="1.5" width="13" height="12.5" fill="#fff" stroke="#5b8bd6" stroke-width="1.1"/><rect x="2.2" y="2.8" width="10.6" height="2.8" fill="#f58a3c"/><rect x="2.6" y="6.8" width="2.6" height="2.2" fill="#bcd3ee"/><rect x="6.2" y="6.8" width="2.6" height="2.2" fill="#9fd08a"/><rect x="2.6" y="10" width="2.6" height="2.2" fill="#bcd3ee"/><rect x="6.2" y="10" width="2.6" height="2.2" fill="#bcd3ee"/><circle cx="12.2" cy="12.2" r="3.6" fill="#5cae3c" stroke="#3d8b27" stroke-width="0.6"/><path d="M10.2 12.2 H14.2 M12.2 10.2 V14.2" stroke="#fff" stroke-width="1.3"/></svg>
<svg class="a" style="left:880px;top:123.5px;" width="16" height="16" viewBox="0 0 16 16"><ellipse cx="8" cy="3.3" rx="6.3" ry="2" fill="#dcdcdc" stroke="#8e8e8e" stroke-width="0.8"/><path d="M1.9 4 L7 9.5 V14.5 L9 13.2 V9.5 L14.1 4 Q8 6.5 1.9 4 Z" fill="#a9a9a9" stroke="#808080" stroke-width="0.6"/></svg>
<svg class="a" style="left:918px;top:123.5px;" width="16" height="16" viewBox="0 0 16 16"><path d="M4 1 H10 L12 3 V8 H4 Z" fill="#dcecff" stroke="#5b9ae6" stroke-width="1"/><rect x="0.8" y="6.5" width="14.4" height="6.5" rx="1.6" fill="#c9c9c9" stroke="#8c8c8c" stroke-width="0.8"/><rect x="3.2" y="10" width="9.6" height="5" fill="#fff" stroke="#5b9ae6" stroke-width="0.9"/><rect x="0.8" y="9.2" width="14.4" height="1.2" fill="#9d9d9d"/></svg>
<svg class="a" style="left:955px;top:123.5px;" width="16" height="16" viewBox="0 0 16 16"><rect x="1" y="1.5" width="12.5" height="12.5" fill="#fff" stroke="#5b8bd6" stroke-width="1.1"/><rect x="2.4" y="3" width="9.6" height="1.4" fill="#9fd08a"/><path d="M4 5 V13 M7 5 V13 M10 5 V13" stroke="#d7e3f5" stroke-width="0.8"/><path d="M15.5 8.3 H8.5 V6.3 L3.5 9.5 L8.5 12.7 V10.7 H15.5 Z" fill="#3f9f3a" stroke="#2e7d1a" stroke-width="0.5"/></svg>
<svg class="a" style="left:991px;top:123.5px;" width="16" height="16" viewBox="0 0 16 16"><rect x="1" y="1.5" width="14" height="12.5" fill="#fff" stroke="#5b8bd6" stroke-width="1.1"/><rect x="1" y="1.5" width="14" height="2.4" fill="#5b8bd6"/><path d="M4.2 5.8 H13.2 M4.2 7.8 H13.2 M4.2 9.8 H13.2 M4.2 11.8 H13.2" stroke="#bdbdbd" stroke-width="1.1"/><path d="M2.6 5.3 V12.4" stroke="#8fb0e0" stroke-width="1" stroke-dasharray="1.1 0.9"/></svg>
<svg class="a" style="left:1018px;top:123.5px;" width="16" height="16" viewBox="0 0 16 16"><rect x="1" y="1.5" width="14" height="12.5" fill="#fff" stroke="#5b8bd6" stroke-width="1.1"/><rect x="1" y="1.5" width="14" height="2.4" fill="#5b8bd6"/><rect x="2.6" y="5.4" width="3.2" height="3" fill="#7bc043"/><rect x="6.5" y="5.4" width="3.2" height="3" fill="#5fae3a"/><rect x="10.4" y="5.4" width="3.2" height="3" fill="#8ec6f0"/><rect x="2.6" y="9.4" width="3.2" height="3" fill="#5fae3a"/><rect x="6.5" y="9.4" width="3.2" height="3" fill="#f58a3c"/><rect x="10.4" y="9.4" width="3.2" height="3" fill="#f5d13c"/></svg>
<svg class="a" style="left:1045px;top:123.5px;" width="16" height="16" viewBox="0 0 16 16"><rect x="1" y="1.5" width="14" height="12.5" fill="#fff" stroke="#5b8bd6" stroke-width="1.1"/><rect x="1" y="1.5" width="14" height="2.4" fill="#5b8bd6"/><rect x="2" y="4.4" width="5" height="8.8" fill="#c5e6b3"/><path d="M7.5 5.2 L12.8 8.8 L7.5 12.4 Z" fill="#3f9f3a"/></svg>
<div class="t" style="left:303.0px;top:162px;font-size:11px;color:#333;letter-spacing:-0.24px;">Display :</div>
<div class="a" style="left:349px;top:156px;width:66px;height:30px;background:#fff;border:1px solid #b8b8b8;"></div>
<div class="t" style="left:359.5px;top:162px;font-size:11.5px;color:#555;letter-spacing:-0.06px;">100</div>
<svg class="a" style="left:401.9px;top:159.8px;" width="9.2" height="6" viewBox="0 0 9.2 6"><path d="M0 6 H9.2 L4.6 0 Z" fill="#177fce"/></svg>
<svg class="a" style="left:401.9px;top:176px;" width="9.2" height="6.4" viewBox="0 0 9.2 6.4"><path d="M0 0 H9.2 L4.6 6.3 Z" fill="#177fce"/></svg>
<div class="t" style="left:418.0px;top:162px;font-size:11px;color:#555;letter-spacing:-0.08px;">elements</div>
<div class="a" style="left:505.5px;top:166px;width:1px;height:8px;background:#777;"></div>
<div class="t" style="left:517.0px;top:162px;font-size:11px;color:#333;letter-spacing:-0.47px;">Page :</div>
<div class="a" style="left:552px;top:156px;width:56px;height:30px;background:#fff;border:1px solid #b8b8b8;"></div>
<div class="t" style="left:562.0px;top:162px;font-size:11.5px;color:#555;">1</div>
<svg class="a" style="left:595px;top:159.8px;" width="9.2" height="6" viewBox="0 0 9.2 6"><path d="M0 6 H9.2 L4.6 0 Z" fill="#177fce"/></svg>
<svg class="a" style="left:595px;top:176px;" width="9.2" height="6.4" viewBox="0 0 9.2 6.4"><path d="M0 0 H9.2 L4.6 6.3 Z" fill="#177fce"/></svg>
<div class="t" style="left:611.0px;top:162px;font-size:11px;color:#555;letter-spacing:-0.09px;">/1</div>
<div class="t" style="left:1240.0px;top:162px;font-size:11px;color:#333;letter-spacing:-0.04px;">Shown 77 documents</div>
<div class="a" style="left:294px;top:195px;width:1042px;height:28px;background:#45a4e0;"></div>
<div class="a" style="left:1105px;top:195px;width:100px;height:28px;background:#177fce;"></div>
<div class="a" style="left:1205px;top:195px;width:131px;height:28px;background:#fff;"></div>
<div class="a" style="left:1336px;top:195px;width:16px;height:28px;background:#45a4e0;"></div>
<svg class="a" style="left:1340px;top:206px;" width="9" height="6" viewBox="0 0 9 6"><path d="M0 0 H9 L4.5 5.5 Z" fill="#fff"/></svg>
<div class="t" style="left:408.0px;top:201px;font-size:11px;color:#fff;letter-spacing:-0.08px;font-weight:bold;">File name</div>
<div class="t" style="left:637.0px;top:201px;font-size:11px;color:#fff;letter-spacing:-0.63px;font-weight:bold;">Size</div>
<div class="t" style="left:682.5px;top:201px;font-size:11px;color:#fff;letter-spacing:-0.30px;font-weight:bold;">File version</div>
<div class="t" style="left:781.5px;top:201px;font-size:11px;color:#fff;letter-spacing:-0.28px;font-weight:bold;">Published</div>
<div class="t" style="left:878.5px;top:201px;font-size:11px;color:#fff;letter-spacing:-0.20px;font-weight:bold;">Published by</div>
<div class="t" style="left:958.4px;top:201px;font-size:11px;color:#fff;letter-spacing:-0.12px;font-weight:bold;">Template</div>
<div class="t" style="left:1108.5px;top:201px;font-size:11px;color:#fff;letter-spacing:-0.20px;font-weight:bold;">Workflow St...</div>
<svg class="a" style="left:1178.8px;top:203.8px;" width="7" height="4" viewBox="0 0 7 4"><path d="M0 0 H7 L3.5 3.8 Z" fill="#fff"/></svg>
<div class="a" style="left:384px;top:223px;width:21px;height:22px;background:#fafafa;"></div>
<div class="a" style="left:605px;top:223px;width:70px;height:22px;background:#fafafa;"></div>
<div class="a" style="left:745px;top:223px;width:120px;height:22px;background:#fafafa;"></div>
<div class="a" style="left:955px;top:223px;width:150px;height:22px;background:#fafafa;"></div>
<svg class="a" style="left:324px;top:227px;" width="12" height="15" viewBox="0 0 12 15"><path d="M1 3 V11.5 A5 2.3 0 0 0 11 11.5 V3 Z" fill="#e6e6e6" stroke="#a2a2a2" stroke-width="1"/><path d="M6.5 5.2 H10.4 V12.2 Q8.5 13.4 6.5 13.4 Z" fill="#cdcdcd"/><ellipse cx="6" cy="3" rx="5" ry="2.2" fill="#f7f7f7" stroke="#a2a2a2" stroke-width="1"/></svg>
<svg class="a" style="left:386.5px;top:225.5px;" width="16" height="16" viewBox="0 0 16 16"><path d="M3 0.7 H11.5 L15 4.2 V15.3 H3 Z" fill="#fdfdfd" stroke="#c4c4c4" stroke-width="0.9"/><path d="M11.5 0.7 V4.2 H15" fill="#eee" stroke="#c4c4c4" stroke-width="0.7"/><path d="M0.8 13 Q5 11 6.6 6 Q7.4 2.6 6.3 2.4 Q5 2.8 6.5 6.5 Q8.4 10.2 13 11.2 Q9 10 0.8 13 Z" fill="none" stroke="#e0413a" stroke-width="1.05"/></svg>
<div class="t" style="left:408.5px;top:226px;font-size:11px;color:#383838;letter-spacing:0.10px;">DB201111122336.pdf</div>
<div class="t" style="left:639.7px;top:226px;font-size:11px;color:#383838;letter-spacing:-0.51px;">158 KB</div>
<div class="t" style="left:703.6px;top:226px;font-size:11px;color:#383838;letter-spacing:-0.36px;">1.0</div>
<div class="t" style="left:754.2px;top:226px;font-size:11px;color:#383838;letter-spacing:0.10px;">06/03/2012 09:09:55</div>
<div class="t" style="left:868.5px;top:226px;font-size:11px;color:#383838;letter-spacing:-0.31px;">Rafet El Romani...</div>
<div class="t" style="left:1108.5px;top:226px;font-size:11px;color:#383838;letter-spacing:-0.01px;">Urlaub abgelehnt</div>
<div class="a" style="left:294px;top:245px;width:90px;height:22px;background:#fafafa;"></div>
<div class="a" style="left:384px;top:245px;width:21px;height:22px;background:#f4f4f4;"></div>
<div class="a" style="left:405px;top:245px;width:200px;height:22px;background:#fafafa;"></div>
<div class="a" style="left:605px;top:245px;width:70px;height:22px;background:#f4f4f4;"></div>
<div class="a" style="left:675px;top:245px;width:70px;height:22px;background:#fafafa;"></div>
<div class="a" style="left:745px;top:245px;width:120px;height:22px;background:#f4f4f4;"></div>
<div class="a" style="left:865px;top:245px;width:90px;height:22px;background:#fafafa;"></div>
<div class="a" style="left:955px;top:245px;width:150px;height:22px;background:#f4f4f4;"></div>
<div class="a" style="left:1105px;top:245px;width:100px;height:22px;background:#fafafa;"></div>
<svg class="a" style="left:324px;top:249px;" width="12" height="15" viewBox="0 0 12 15"><path d="M1 3 V11.5 A5 2.3 0 0 0 11 11.5 V3 Z" fill="#e6e6e6" stroke="#a2a2a2" stroke-width="1"/><path d="M6.5 5.2 H10.4 V12.2 Q8.5 13.4 6.5 13.4 Z" fill="#cdcdcd"/><ellipse cx="6" cy="3" rx="5" ry="2.2" fill="#f7f7f7" stroke="#a2a2a2" stroke-width="1"/></svg>
<svg class="a" style="left:386.5px;top:247.5px;" width="16" height="16" viewBox="0 0 16 16"><path d="M3 0.7 H11.5 L15 4.2 V15.3 H3 Z" fill="#fdfdfd" stroke="#c4c4c4" stroke-width="0.9"/><path d="M11.5 0.7 V4.2 H15" fill="#eee" stroke="#c4c4c4" stroke-width="0.7"/><path d="M0.8 13 Q5 11 6.6 6 Q7.4 2.6 6.3 2.4 Q5 2.8 6.5 6.5 Q8.4 10.2 13 11.2 Q9 10 0.8 13 Z" fill="none" stroke="#e0413a" stroke-width="1.05"/></svg>
<div class="t" style="left:408.5px;top:248px;font-size:11px;color:#383838;letter-spacing:0.06px;">30115 inv.pdf</div>
<div class="t" style="left:645.9px;top:248px;font-size:11px;color:#383838;letter-spacing:-0.63px;">15 KB</div>
<div class="t" style="left:703.6px;top:248px;font-size:11px;color:#383838;letter-spacing:-0.36px;">1.0</div>
<div class="t" style="left:754.2px;top:248px;font-size:11px;color:#383838;letter-spacing:0.14px;">05/12/2011 16:39:13</div>
<div class="t" style="left:883.8px;top:248px;font-size:11px;color:#383838;letter-spacing:-0.26px;">John Bravo</div>
<div class="t" style="left:958.4px;top:248px;font-size:11px;color:#383838;letter-spacing:-0.12px;">invoice</div>
<div class="t" style="left:1108.5px;top:248px;font-size:11px;color:#383838;letter-spacing:-0.44px;">The End</div>
<div class="a" style="left:384px;top:267px;width:21px;height:22px;background:#fafafa;"></div>
<div class="a" style="left:605px;top:267px;width:70px;height:22px;background:#fafafa;"></div>
<div class="a" style="left:745px;top:267px;width:120px;height:22px;background:#fafafa;"></div>
<div class="a" style="left:955px;top:267px;width:150px;height:22px;background:#fafafa;"></div>
<svg class="a" style="left:324px;top:271px;" width="12" height="15" viewBox="0 0 12 15"><path d="M1 3 V11.5 A5 2.3 0 0 0 11 11.5 V3 Z" fill="#e6e6e6" stroke="#a2a2a2" stroke-width="1"/><path d="M6.5 5.2 H10.4 V12.2 Q8.5 13.4 6.5 13.4 Z" fill="#cdcdcd"/><ellipse cx="6" cy="3" rx="5" ry="2.2" fill="#f7f7f7" stroke="#a2a2a2" stroke-width="1"/></svg>
<svg class="a" style="left:386.5px;top:269.5px;" width="16" height="16" viewBox="0 0 16 16"><path d="M3 0.7 H11.5 L15 4.2 V15.3 H3 Z" fill="#fdfdfd" stroke="#c4c4c4" stroke-width="0.9"/><path d="M11.5 0.7 V4.2 H15" fill="#eee" stroke="#c4c4c4" stroke-width="0.7"/><rect x="0.8" y="4.5" width="10" height="8.8" fill="#3e6fd0"/><rect x="2" y="5.7" width="7.6" height="6.4" fill="#7ea3ea"/><path d="M2.8 6.6 L4 11 L5.8 7.4 L7.4 11 L8.8 6.6" fill="none" stroke="#fff" stroke-width="1.1"/></svg>
<div class="t" style="left:408.5px;top:270px;font-size:11px;color:#383838;letter-spacing:-0.13px;">Do Stuff.doc</div>
<div class="t" style="left:639.7px;top:270px;font-size:11px;color:#383838;letter-spacing:-0.51px;">128 KB</div>
<div class="t" style="left:703.6px;top:270px;font-size:11px;color:#383838;letter-spacing:-0.36px;">1.0</div>
<div class="t" style="left:754.2px;top:270px;font-size:11px;color:#383838;letter-spacing:0.14px;">06/03/2011 17:09:20</div>
<div class="t" style="left:877.8px;top:270px;font-size:11px;color:#383838;letter-spacing:0.02px;">Admin Admin</div>
<div class="t" style="left:958.4px;top:270px;font-size:11px;color:#383838;letter-spacing:-0.12px;">invoice</div>
<div class="t" style="left:1108.5px;top:270px;font-size:11px;color:#383838;letter-spacing:-0.26px;">State Name</div>
<div class="a" style="left:294px;top:289px;width:90px;height:22px;background:#fafafa;"></div>
<div class="a" style="left:384px;top:289px;width:21px;height:22px;background:#f4f4f4;"></div>
<div class="a" style="left:405px;top:289px;width:200px;height:22px;background:#fafafa;"></div>
<div class="a" style="left:605px;top:289px;width:70px;height:22px;background:#f4f4f4;"></div>
<div class="a" style="left:675px;top:289px;width:70px;height:22px;background:#fafafa;"></div>
<div class="a" style="left:745px;top:289px;width:120px;height:22px;background:#f4f4f4;"></div>
<div class="a" style="left:865px;top:289px;width:90px;height:22px;background:#fafafa;"></div>
<div class="a" style="left:955px;top:289px;width:150px;height:22px;background:#f4f4f4;"></div>
<div class="a" style="left:1105px;top:289px;width:100px;height:22px;background:#fafafa;"></div>
<svg class="a" style="left:324px;top:293px;" width="12" height="15" viewBox="0 0 12 15"><path d="M1 3 V11.5 A5 2.3 0 0 0 11 11.5 V3 Z" fill="#e6e6e6" stroke="#a2a2a2" stroke-width="1"/><path d="M6.5 5.2 H10.4 V12.2 Q8.5 13.4 6.5 13.4 Z" fill="#cdcdcd"/><ellipse cx="6" cy="3" rx="5" ry="2.2" fill="#f7f7f7" stroke="#a2a2a2" stroke-width="1"/></svg>
<svg class="a" style="left:386.5px;top:291.5px;" width="16" height="16" viewBox="0 0 16 16"><path d="M3 0.7 H11.5 L15 4.2 V15.3 H3 Z" fill="#fdfdfd" stroke="#c4c4c4" stroke-width="0.9"/><path d="M11.5 0.7 V4.2 H15" fill="#eee" stroke="#c4c4c4" stroke-width="0.7"/><rect x="0.8" y="4.5" width="10" height="8.8" fill="#3e6fd0"/><rect x="2" y="5.7" width="7.6" height="6.4" fill="#7ea3ea"/><path d="M2.8 6.6 L4 11 L5.8 7.4 L7.4 11 L8.8 6.6" fill="none" stroke="#fff" stroke-width="1.1"/></svg>
<div class="t" style="left:408.5px;top:292px;font-size:11px;color:#888;letter-spacing:-0.59px;font-style:italic;">QUESTIONARY_DE.doc</div>
<div class="t" style="left:645.9px;top:292px;font-size:11px;color:#383838;letter-spacing:-0.63px;">50 KB</div>
<div class="t" style="left:700.5px;top:292px;font-size:11px;color:#383838;letter-spacing:-0.23px;">1.10</div>
<div class="t" style="left:754.2px;top:292px;font-size:11px;color:#383838;letter-spacing:0.14px;">09/12/2011 08:53:40</div>
<div class="t" style="left:883.8px;top:292px;font-size:11px;color:#383838;letter-spacing:-0.26px;">John Bravo</div>
<div class="t" style="left:958.4px;top:292px;font-size:11px;color:#383838;letter-spacing:0.05px;">default</div>
<div class="t" style="left:1108.5px;top:292px;font-size:11px;color:#383838;letter-spacing:0.01px;">Start operation</div>
<div class="a" style="left:384px;top:311px;width:21px;height:22px;background:#fafafa;"></div>
<div class="a" style="left:605px;top:311px;width:70px;height:22px;background:#fafafa;"></div>
<div class="a" style="left:745px;top:311px;width:120px;height:22px;background:#fafafa;"></div>
<div class="a" style="left:955px;top:311px;width:150px;height:22px;background:#fafafa;"></div>
<svg class="a" style="left:314px;top:315px;" width="12" height="15" viewBox="0 0 12 15"><path d="M1 3 V11.5 A5 2.3 0 0 0 11 11.5 V3 Z" fill="#e6e6e6" stroke="#a2a2a2" stroke-width="1"/><path d="M6.5 5.2 H10.4 V12.2 Q8.5 13.4 6.5 13.4 Z" fill="#cdcdcd"/><ellipse cx="6" cy="3" rx="5" ry="2.2" fill="#f7f7f7" stroke="#a2a2a2" stroke-width="1"/></svg>
<svg class="a" style="left:332px;top:314px;" width="15" height="16" viewBox="0 0 15 16"><rect x="0.6" y="0.6" width="13.8" height="14.8" fill="#eef5ff" stroke="#3f7fd6" stroke-width="1.1"/><rect x="2" y="11" width="11" height="3" fill="#7dbbf3"/><path d="M3.5 12 L4.5 8.5 L10.8 2 L13.2 4.1 L7 10.8 Z" fill="#f2b33d" stroke="#b97a1a" stroke-width="0.7"/><path d="M3.5 12 L4.5 8.5 L7 10.8 Z" fill="#f7e2b8"/><path d="M3.5 12 L4 10.5 L4.8 11.4 Z" fill="#444"/></svg>
<svg class="a" style="left:386.5px;top:313.5px;" width="16" height="16" viewBox="0 0 16 16"><path d="M3 0.7 H11.5 L15 4.2 V15.3 H3 Z" fill="#fdfdfd" stroke="#c4c4c4" stroke-width="0.9"/><path d="M11.5 0.7 V4.2 H15" fill="#eee" stroke="#c4c4c4" stroke-width="0.7"/><path d="M0.8 13 Q5 11 6.6 6 Q7.4 2.6 6.3 2.4 Q5 2.8 6.5 6.5 Q8.4 10.2 13 11.2 Q9 10 0.8 13 Z" fill="none" stroke="#e0413a" stroke-width="1.05"/></svg>
<div class="t" style="left:408.5px;top:314px;font-size:11px;color:#383838;letter-spacing:-0.67px;">CARACAS.pdf</div>
<div class="t" style="left:639.7px;top:314px;font-size:11px;color:#383838;letter-spacing:-0.51px;">878 KB</div>
<div class="t" style="left:703.6px;top:314px;font-size:11px;color:#383838;letter-spacing:-0.36px;">1.0</div>
<div class="t" style="left:754.2px;top:314px;font-size:11px;color:#383838;letter-spacing:0.10px;">06/04/2012 16:58:02</div>
<div class="t" style="left:878.5px;top:314px;font-size:11px;color:#383838;letter-spacing:-0.15px;">Zajim Kujovic</div>
<div class="t" style="left:958.4px;top:314px;font-size:11px;color:#383838;letter-spacing:0.05px;">default</div>
<div class="t" style="left:1108.5px;top:314px;font-size:11px;color:#383838;letter-spacing:0.01px;">Start operation</div>
<div class="a" style="left:294px;top:333px;width:911px;height:22px;background:#62b7ee;"></div>
<svg class="a" style="left:324px;top:337px;" width="12" height="15" viewBox="0 0 12 15"><path d="M1 3 V11.5 A5 2.3 0 0 0 11 11.5 V3 Z" fill="#e6e6e6" stroke="#a2a2a2" stroke-width="1"/><path d="M6.5 5.2 H10.4 V12.2 Q8.5 13.4 6.5 13.4 Z" fill="#cdcdcd"/><ellipse cx="6" cy="3" rx="5" ry="2.2" fill="#f7f7f7" stroke="#a2a2a2" stroke-width="1"/></svg>
<svg class="a" style="left:386.5px;top:335.5px;" width="16" height="16" viewBox="0 0 16 16"><path d="M3 0.7 H11.5 L15 4.2 V15.3 H3 Z" fill="#fdfdfd" stroke="#c4c4c4" stroke-width="0.9"/><path d="M11.5 0.7 V4.2 H15" fill="#eee" stroke="#c4c4c4" stroke-width="0.7"/><path d="M0.8 13 Q5 11 6.6 6 Q7.4 2.6 6.3 2.4 Q5 2.8 6.5 6.5 Q8.4 10.2 13 11.2 Q9 10 0.8 13 Z" fill="none" stroke="#e0413a" stroke-width="1.05"/></svg>
<div class="t" style="left:408.5px;top:336px;font-size:11px;color:#fff;letter-spacing:0.06px;">teste.pdf</div>
<div class="t" style="left:631.0px;top:336px;font-size:11px;color:#fff;letter-spacing:-0.44px;">2,669 KB</div>
<div class="t" style="left:703.6px;top:336px;font-size:11px;color:#fff;letter-spacing:-0.36px;">1.0</div>
<div class="t" style="left:754.2px;top:336px;font-size:11px;color:#fff;letter-spacing:0.10px;">19/01/2012 19:13:27</div>
<div class="t" style="left:887.9px;top:336px;font-size:11px;color:#fff;letter-spacing:-0.29px;">John Doe</div>
<div class="t" style="left:1108.5px;top:336px;font-size:11px;color:#fff;letter-spacing:-0.17px;">Start</div>
<div class="a" style="left:384px;top:355px;width:21px;height:22px;background:#fafafa;"></div>
<div class="a" style="left:605px;top:355px;width:70px;height:22px;background:#fafafa;"></div>
<div class="a" style="left:745px;top:355px;width:120px;height:22px;background:#fafafa;"></div>
<div class="a" style="left:955px;top:355px;width:150px;height:22px;background:#fafafa;"></div>
<svg class="a" style="left:324px;top:359px;" width="12" height="15" viewBox="0 0 12 15"><path d="M1 3 V11.5 A5 2.3 0 0 0 11 11.5 V3 Z" fill="#e6e6e6" stroke="#a2a2a2" stroke-width="1"/><path d="M6.5 5.2 H10.4 V12.2 Q8.5 13.4 6.5 13.4 Z" fill="#cdcdcd"/><ellipse cx="6" cy="3" rx="5" ry="2.2" fill="#f7f7f7" stroke="#a2a2a2" stroke-width="1"/></svg>
<svg class="a" style="left:386.5px;top:357.5px;" width="16" height="16" viewBox="0 0 16 16"><path d="M2.5 0.7 H10.5 L14 4.2 V15.3 H2.5 Z" fill="#fdfdfd" stroke="#b9b9b9" stroke-width="0.9"/><path d="M10.5 0.7 V4.2 H14" fill="#eee" stroke="#b9b9b9" stroke-width="0.7"/><path d="M4.5 6.5 H12 M4.5 8.5 H12 M4.5 10.5 H12 M4.5 12.5 H12" stroke="#b0b0b0" stroke-width="0.9"/></svg>
<div class="t" style="left:408.5px;top:358px;font-size:11px;color:#383838;">personal.txt</div>
<div class="t" style="left:639.7px;top:358px;font-size:11px;color:#383838;letter-spacing:-0.51px;">149 KB</div>
<div class="t" style="left:703.6px;top:358px;font-size:11px;color:#383838;letter-spacing:-0.36px;">1.0</div>
<div class="t" style="left:754.2px;top:358px;font-size:11px;color:#383838;letter-spacing:0.10px;">16/02/2012 15:00:56</div>
<div class="t" style="left:868.5px;top:358px;font-size:11px;color:#383838;letter-spacing:-0.31px;">Rafet El Romani...</div>
<div class="t" style="left:1108.5px;top:358px;font-size:11px;color:#383838;letter-spacing:-0.20px;">Prüfung Personal...</div>
<div class="a" style="left:294px;top:377px;width:90px;height:22px;background:#fafafa;"></div>
<div class="a" style="left:384px;top:377px;width:21px;height:22px;background:#f4f4f4;"></div>
<div class="a" style="left:405px;top:377px;width:200px;height:22px;background:#fafafa;"></div>
<div class="a" style="left:605px;top:377px;width:70px;height:22px;background:#f4f4f4;"></div>
<div class="a" style="left:675px;top:377px;width:70px;height:22px;background:#fafafa;"></div>
<div class="a" style="left:745px;top:377px;width:120px;height:22px;background:#f4f4f4;"></div>
<div class="a" style="left:865px;top:377px;width:90px;height:22px;background:#fafafa;"></div>
<div class="a" style="left:955px;top:377px;width:150px;height:22px;background:#f4f4f4;"></div>
<div class="a" style="left:1105px;top:377px;width:100px;height:22px;background:#fafafa;"></div>
<svg class="a" style="left:324px;top:381px;" width="12" height="15" viewBox="0 0 12 15"><path d="M1 3 V11.5 A5 2.3 0 0 0 11 11.5 V3 Z" fill="#e6e6e6" stroke="#a2a2a2" stroke-width="1"/><path d="M6.5 5.2 H10.4 V12.2 Q8.5 13.4 6.5 13.4 Z" fill="#cdcdcd"/><ellipse cx="6" cy="3" rx="5" ry="2.2" fill="#f7f7f7" stroke="#a2a2a2" stroke-width="1"/></svg>
<svg class="a" style="left:386.5px;top:379.5px;" width="16" height="16" viewBox="0 0 16 16"><path d="M3 0.7 H11.5 L15 4.2 V15.3 H3 Z" fill="#fdfdfd" stroke="#c4c4c4" stroke-width="0.9"/><path d="M11.5 0.7 V4.2 H15" fill="#eee" stroke="#c4c4c4" stroke-width="0.7"/><path d="M0.8 13 Q5 11 6.6 6 Q7.4 2.6 6.3 2.4 Q5 2.8 6.5 6.5 Q8.4 10.2 13 11.2 Q9 10 0.8 13 Z" fill="none" stroke="#e0413a" stroke-width="1.05"/></svg>
<div class="t" style="left:408.5px;top:380px;font-size:11px;color:#383838;letter-spacing:-0.61px;">TEST1.pdf</div>
<div class="t" style="left:631.0px;top:380px;font-size:11px;color:#383838;letter-spacing:-0.44px;">3,607 KB</div>
<div class="t" style="left:703.6px;top:380px;font-size:11px;color:#383838;letter-spacing:-0.36px;">1.0</div>
<div class="t" style="left:754.2px;top:380px;font-size:11px;color:#383838;letter-spacing:0.14px;">10/10/2011 16:23:32</div>
<div class="t" style="left:887.9px;top:380px;font-size:11px;color:#383838;letter-spacing:-0.29px;">John Doe</div>
<div class="t" style="left:1108.5px;top:380px;font-size:11px;color:#383838;letter-spacing:-0.29px;">Neues Rundschre...</div>
<div class="a" style="left:1336px;top:223px;width:16px;height:169px;background:#fff;"></div>
<svg class="a" style="left:1338px;top:228px;" width="12" height="8" viewBox="0 0 12 8"><path d="M1.5 6.5 L6 2 L10.5 6.5" fill="none" stroke="#444" stroke-width="1.4"/></svg>
<svg class="a" style="left:1338px;top:379px;" width="12" height="8" viewBox="0 0 12 8"><path d="M1.5 1.5 L6 6 L10.5 1.5" fill="none" stroke="#444" stroke-width="1.4"/></svg>
<div class="a" style="left:1341.5px;top:243px;width:7px;height:20px;background:#787878;"></div>
<div class="a" style="left:293px;top:195px;width:1px;height:197px;background:#cfd1d4;"></div>
<div class="a" style="left:1352px;top:195px;width:1px;height:197px;background:#cfd1d4;"></div>
<div class="a" style="left:293px;top:392px;width:1060px;height:8px;background:#e5e5e5;"></div>
<div class="a" style="left:293px;top:392px;width:1060px;height:1px;background:#cfd1d4;"></div>
<div class="a" style="left:813px;top:395.5px;width:3px;height:2.5px;background:#b4b4b4;"></div>
<div class="a" style="left:817.1px;top:395.5px;width:3px;height:2.5px;background:#b4b4b4;"></div>
<div class="a" style="left:821.2px;top:395.5px;width:3px;height:2.5px;background:#b4b4b4;"></div>
<div class="a" style="left:825.3px;top:395.5px;width:3px;height:2.5px;background:#b4b4b4;"></div>
<div class="a" style="left:829.4px;top:395.5px;width:3px;height:2.5px;background:#b4b4b4;"></div>
<div class="a" style="left:293px;top:400px;width:962px;height:27px;background:#fff;"></div>
<div class="a" style="left:1255px;top:400px;width:98px;height:27px;background:#e5e5e5;"></div>
<div class="a" style="left:293px;top:426px;width:1060px;height:210px;background:#fff;border:1px solid #9c9c9c;"></div>
<div class="a" style="left:298px;top:403px;width:108px;height:24px;background:#177fce;border:2px solid #0b5296;border-bottom:none;border-radius:4px 4px 0 0;"></div>
<div class="t" style="left:327.5px;top:407px;font-size:11px;color:#fff;letter-spacing:-0.54px;font-weight:bold;">Properties</div>
<div class="a" style="left:411px;top:403px;width:129px;height:23px;background:#b0b0b0;border-radius:4px 4px 0 0;"></div>
<div class="t" style="left:440.0px;top:407px;font-size:11px;color:#fff;letter-spacing:-0.44px;font-weight:bold;">Ext. Properties</div>
<div class="a" style="left:545px;top:403px;width:99px;height:23px;background:#b0b0b0;border-radius:4px 4px 0 0;"></div>
<div class="t" style="left:574.5px;top:407px;font-size:11px;color:#fff;letter-spacing:-0.73px;font-weight:bold;">Versions</div>
<div class="a" style="left:649px;top:403px;width:97px;height:23px;background:#b0b0b0;border-radius:4px 4px 0 0;"></div>
<div class="t" style="left:678.5px;top:407px;font-size:11px;color:#fff;letter-spacing:-0.51px;font-weight:bold;">Preview</div>
<div class="a" style="left:751px;top:403px;width:87px;height:23px;background:#b0b0b0;border-radius:4px 4px 0 0;"></div>
<div class="t" style="left:780.2px;top:407px;font-size:11px;color:#fff;letter-spacing:-0.41px;font-weight:bold;">Notes</div>
<div class="a" style="left:843px;top:403px;width:84px;height:23px;background:#b0b0b0;border-radius:4px 4px 0 0;"></div>
<div class="t" style="left:872.5px;top:407px;font-size:11px;color:#fff;letter-spacing:-0.75px;font-weight:bold;">Links</div>
<div class="a" style="left:932px;top:403px;width:93px;height:23px;background:#b0b0b0;border-radius:4px 4px 0 0;"></div>
<div class="t" style="left:961.0px;top:407px;font-size:11px;color:#fff;letter-spacing:-0.41px;font-weight:bold;">History</div>
<div class="a" style="left:1030px;top:403px;width:105px;height:23px;background:#b0b0b0;border-radius:4px 4px 0 0;"></div>
<div class="t" style="left:1059.2px;top:407px;font-size:11px;color:#fff;letter-spacing:-0.47px;font-weight:bold;">Signature</div>
<div class="a" style="left:1140px;top:403px;width:108px;height:23px;background:#b0b0b0;border-radius:4px 4px 0 0;"></div>
<div class="t" style="left:1169.0px;top:407px;font-size:11px;color:#fff;letter-spacing:-0.62px;font-weight:bold;">Publishing</div>
<div class="a" style="left:1253px;top:403px;width:2px;height:23px;background:#b0b0b0;border-radius:2px 0 0 0;"></div>
<svg class="a" style="left:1269.3px;top:410px;" width="8" height="12" viewBox="0 0 8 12"><path d="M7.5 0 V12 L0.3 6 Z" fill="#595959"/></svg>
<svg class="a" style="left:1303px;top:410px;" width="8" height="12" viewBox="0 0 8 12"><path d="M0 0 V12 L7.2 6 Z" fill="#595959"/></svg>
<svg class="a" style="left:1333px;top:413px;" width="13" height="8" viewBox="0 0 13 8"><path d="M0 0 H12.4 L6.2 7.4 Z" fill="#595959"/></svg>
<div class="t" style="left:371.5px;top:432px;font-size:11px;color:#444;letter-spacing:-0.65px;">ID :</div>
<div class="t" style="left:390.5px;top:432px;font-size:11px;color:#444;letter-spacing:-0.03px;">1456 (1456/)</div>
<div class="t" style="left:334.5px;top:453px;font-size:11px;color:#1c2d4f;letter-spacing:-0.26px;">File name :</div>
<div class="a" style="left:390px;top:451px;width:246px;height:22px;background:#fff;border:1px solid #b5b5b5;"></div>
<div class="t" style="left:400.0px;top:454px;font-size:12px;color:#444;">teste.pdf</div>
<div class="t" style="left:351.5px;top:475px;font-size:11px;color:#444;letter-spacing:-0.35px;">Folder :</div>
<div class="t" style="left:390.5px;top:475px;font-size:11px;color:#0000ee;letter-spacing:0.07px;text-decoration:underline;">/Default</div>
<div class="t" style="left:361.5px;top:492px;font-size:11px;color:#444;letter-spacing:-0.50px;">Size :</div>
<div class="t" style="left:390.5px;top:492px;font-size:11px;color:#444;letter-spacing:-0.18px;">2.61 MB (2,732,192 bytes)</div>
<div class="t" style="left:327.0px;top:509px;font-size:11px;color:#444;letter-spacing:-0.24px;">File version :</div>
<div class="t" style="left:390.5px;top:509px;font-size:11px;color:#444;letter-spacing:-0.16px;">1.0 (1.1)</div>
<div class="t" style="left:302.0px;top:526px;font-size:11px;color:#444;letter-spacing:-0.08px;">Workflow Status :</div>
<div class="t" style="left:390.5px;top:526px;font-size:11px;color:#444;letter-spacing:-0.05px;">Start</div>
<div class="t" style="left:328.5px;top:543px;font-size:11px;color:#444;letter-spacing:-0.25px;">Created on :</div>
<div class="t" style="left:390.5px;top:543px;font-size:11px;color:#444;letter-spacing:-0.08px;">19/01/2012 19:13:27 By John Doe</div>
<div class="t" style="left:319.0px;top:560px;font-size:11px;color:#444;letter-spacing:-0.19px;">Published on :</div>
<div class="t" style="left:390.5px;top:560px;font-size:11px;color:#444;letter-spacing:-0.08px;">19/01/2012 19:13:27 By John Doe</div>
<div class="t" style="left:333.0px;top:577px;font-size:11px;color:#444;letter-spacing:-0.18px;">Permalink :</div>
<div class="t" style="left:390.5px;top:577px;font-size:11px;color:#0000ee;letter-spacing:-0.11px;text-decoration:underline;">Download</div>
<div class="t" style="left:441.0px;top:577px;font-size:11px;color:#444;">|</div>
<div class="t" style="left:446.5px;top:577px;font-size:11px;color:#0000ee;letter-spacing:-0.23px;text-decoration:underline;">Details</div>
<div class="t" style="left:667.5px;top:434px;font-size:11px;color:#444;letter-spacing:-0.30px;">Rating :</div>
<svg class="a" style="left:766px;top:435px;" width="14" height="15" viewBox="0 0 14 15"><defs><linearGradient id="sg0" x1="0" y1="0" x2="0" y2="1"><stop offset="0" stop-color="#e2e2e2"/><stop offset="1" stop-color="#b4b4b4"/></linearGradient></defs><path d="M7 0.6 L9 5.3 L13.7 5.7 L10.1 9 L11.3 14 L7 11.3 L2.7 14 L3.9 9 L0.3 5.7 L5 5.3 Z" fill="url(#sg0)" stroke="#b9b9b9" stroke-width="0.6"/></svg>
<svg class="a" style="left:783.5px;top:435px;" width="14" height="15" viewBox="0 0 14 15"><defs><linearGradient id="sg1" x1="0" y1="0" x2="0" y2="1"><stop offset="0" stop-color="#e2e2e2"/><stop offset="1" stop-color="#b4b4b4"/></linearGradient></defs><path d="M7 0.6 L9 5.3 L13.7 5.7 L10.1 9 L11.3 14 L7 11.3 L2.7 14 L3.9 9 L0.3 5.7 L5 5.3 Z" fill="url(#sg1)" stroke="#b9b9b9" stroke-width="0.6"/></svg>
<svg class="a" style="left:801px;top:435px;" width="14" height="15" viewBox="0 0 14 15"><defs><linearGradient id="sg2" x1="0" y1="0" x2="0" y2="1"><stop offset="0" stop-color="#e2e2e2"/><stop offset="1" stop-color="#b4b4b4"/></linearGradient></defs><path d="M7 0.6 L9 5.3 L13.7 5.7 L10.1 9 L11.3 14 L7 11.3 L2.7 14 L3.9 9 L0.3 5.7 L5 5.3 Z" fill="url(#sg2)" stroke="#b9b9b9" stroke-width="0.6"/></svg>
<svg class="a" style="left:818.5px;top:435px;" width="14" height="15" viewBox="0 0 14 15"><defs><linearGradient id="sg3" x1="0" y1="0" x2="0" y2="1"><stop offset="0" stop-color="#e2e2e2"/><stop offset="1" stop-color="#b4b4b4"/></linearGradient></defs><path d="M7 0.6 L9 5.3 L13.7 5.7 L10.1 9 L11.3 14 L7 11.3 L2.7 14 L3.9 9 L0.3 5.7 L5 5.3 Z" fill="url(#sg3)" stroke="#b9b9b9" stroke-width="0.6"/></svg>
<svg class="a" style="left:836px;top:435px;" width="14" height="15" viewBox="0 0 14 15"><defs><linearGradient id="sg4" x1="0" y1="0" x2="0" y2="1"><stop offset="0" stop-color="#e2e2e2"/><stop offset="1" stop-color="#b4b4b4"/></linearGradient></defs><path d="M7 0.6 L9 5.3 L13.7 5.7 L10.1 9 L11.3 14 L7 11.3 L2.7 14 L3.9 9 L0.3 5.7 L5 5.3 Z" fill="url(#sg4)" stroke="#b9b9b9" stroke-width="0.6"/></svg>
<div class="t" style="left:651.0px;top:459px;font-size:11px;color:#444;letter-spacing:-0.30px;">Language :</div>
<div class="a" style="left:707px;top:456px;width:116px;height:22px;background:#fff;border:1px solid #b5b5b5;"></div>
<div class="t" style="left:717.5px;top:459px;font-size:12px;color:#333;letter-spacing:-0.27px;">English</div>
<svg class="a" style="left:810px;top:464.5px;" width="8" height="5" viewBox="0 0 8 5"><path d="M0 0 H8 L4 5 Z" fill="#177fce"/></svg>
<div class="t" style="left:680.5px;top:484px;font-size:11px;color:#444;letter-spacing:-0.27px;">Tag :</div>
<div class="a" style="left:707px;top:482px;width:130px;height:22px;background:#fff;border:1px solid #b5b5b5;"></div>
<div class="t" style="left:717.5px;top:485px;font-size:12px;color:#808080;letter-spacing:-0.27px;">Enter values</div>
<svg class="a" style="left:824.5px;top:490px;" width="8" height="5" viewBox="0 0 8 5"><path d="M0 0 H8 L4 5 Z" fill="#177fce"/></svg>
<div class="t" style="left:658.0px;top:510px;font-size:11px;color:#444;letter-spacing:-0.16px;">New tag :</div>
<div class="a" style="left:707px;top:508px;width:146px;height:22px;background:#fff;border:1px solid #b5b5b5;"></div>
<svg class="a" style="left:1134px;top:440px;" width="213" height="190.5" viewBox="0 0 213 191">
<defs>
<linearGradient id="tg1" x1="0" y1="0" x2="0" y2="1"><stop offset="0" stop-color="#7f9bd5"/><stop offset="0.15" stop-color="#93ace0"/><stop offset="0.5" stop-color="#c3d2ee"/><stop offset="0.85" stop-color="#eef3fb"/><stop offset="1" stop-color="#ffffff"/></linearGradient>
<linearGradient id="tg2" x1="0" y1="0" x2="1" y2="0"><stop offset="0" stop-color="#ffffff" stop-opacity="0.85"/><stop offset="0.45" stop-color="#ffffff" stop-opacity="0.45"/><stop offset="0.62" stop-color="#ffffff" stop-opacity="0"/><stop offset="1" stop-color="#ffffff" stop-opacity="0"/></linearGradient>
<linearGradient id="tg5" x1="0" y1="0" x2="1" y2="0"><stop offset="0.45" stop-color="#6f8fd0" stop-opacity="0"/><stop offset="1" stop-color="#6f8fd0" stop-opacity="0.38"/></linearGradient>
<linearGradient id="tg6" x1="0" y1="0" x2="0" y2="1"><stop offset="0" stop-color="#fff" stop-opacity="0"/><stop offset="0.6" stop-color="#fff" stop-opacity="0"/><stop offset="1" stop-color="#fff" stop-opacity="1"/></linearGradient>
<linearGradient id="tg3" x1="0" y1="0" x2="0" y2="1"><stop offset="0" stop-color="#f4f4f2"/><stop offset="1" stop-color="#e2e3e0"/></linearGradient>
<linearGradient id="tg4" x1="0" y1="0" x2="1" y2="0"><stop offset="0" stop-color="#c5c7c4"/><stop offset="1" stop-color="#9a9c99"/></linearGradient>
</defs>
<rect x="0" y="0" width="214" height="191" fill="#ffffff"/>
<rect x="0" y="0" width="214" height="62" fill="url(#tg1)"/>
<rect x="0" y="0" width="214" height="62" fill="url(#tg2)"/>
<rect x="0" y="0" width="214" height="62" fill="url(#tg5)"/><rect x="0" y="0" width="214" height="62" fill="url(#tg6)"/>
<path d="M38 0 H64 L51 11 Z" fill="#7f9bd4" opacity="0.8"/>
<path d="M36 0 L44 0 L78 30 L100 55 L88 55 Z" fill="#ffffff" opacity="0.45"/>
<path d="M66 0 L58 0 L10 40 L0 52 L0 60 L20 44 Z" fill="#ffffff" opacity="0.5"/>
<path d="M150 8 Q185 2 214 14 V40 Q185 22 150 8 Z" fill="#7c98d4" opacity="0.35"/>
<text x="17.5" y="21" font-family="Liberation Sans, sans-serif" font-size="10.2" fill="#111" stroke="#111" stroke-width="0.35" textLength="116.5" lengthAdjust="spacingAndGlyphs">imageFORMULA</text>
<text x="73.5" y="33.3" font-family="Liberation Sans, sans-serif" font-size="10.2" fill="#111" stroke="#111" stroke-width="0.4" textLength="60.5" lengthAdjust="spacingAndGlyphs">DR-2510C</text>
<text x="73.5" y="43.7" font-family="Liberation Sans, sans-serif" font-size="10.2" fill="#111" stroke="#111" stroke-width="0.4" textLength="60.5" lengthAdjust="spacingAndGlyphs">DR-2010C</text>
<g font-family="Liberation Serif, serif" font-style="italic" fill="#4a54a8" fill-opacity="0.8">
<text x="138" y="31" font-size="7.5" textLength="58" lengthAdjust="spacingAndGlyphs">$ 547 cat/listing</text>
<text x="203" y="27" font-size="5" textLength="10" lengthAdjust="spacingAndGlyphs">Fax</text>
<text x="138" y="46" font-size="6.5" textLength="52" lengthAdjust="spacingAndGlyphs">$ 389  amazon</text>
<text x="59" y="74.5" font-size="7" textLength="78" lengthAdjust="spacingAndGlyphs" transform="rotate(-4 59 74.5)">DR-2010 = Buy 439</text>
<text x="103" y="83" font-size="6.5" textLength="44" lengthAdjust="spacingAndGlyphs" transform="rotate(-5 103 83)">amzn = 389</text>
</g>
<!-- second scanner (cut off at right) -->
<path d="M196 86 L214 60 V152 Q190 156 172 148 L178 128 Z" fill="#f7f7f4"/>
<path d="M172 140 Q192 150 214 146 V153 Q190 157 171 149 Z" fill="#b9c2b2"/>
<path d="M180 124 L214 133 V135 L180 127 Z" fill="#b4b8b0"/>
<path d="M196 86 L214 60" stroke="#d9dad6" stroke-width="1"/><path d="M190 112 L199 96 M196 116 L206 99" stroke="#cfd0cc" stroke-width="0.8"/><path d="M186 126.5 L192 128 M196 129 L204 131 M207 131.5 L213 133" stroke="#555" stroke-width="1.2"/>
<!-- main scanner -->
<path d="M133 88 L186 85.5 L181 119.5 L121.5 120 Z" fill="url(#tg3)" stroke="#c8c9c6" stroke-width="0.7"/>
<path d="M186 85.5 L188 87 L183 121 L181 119.5 Z" fill="#9d9f9c"/>
<path d="M106.5 117 Q112 115 121.5 120 L181 119.5 L151 158 L93 147 Q95 128 106.5 117 Z" fill="#f3f3f1" stroke="#cfd0cd" stroke-width="0.7"/>
<path d="M121.5 120 L181 119.5 L178 123 L122 123.5 Z" fill="#c9cac7"/>
<path d="M143 124 h14 v4 h-14 Z" fill="#b3b5b2"/>
<path d="M93 147 L151 158 L153 169 L96 158 Z" fill="#e4e5e2" stroke="#bfc0bd" stroke-width="0.6"/>
<path d="M112 151.5 L120 153 M124 153.8 L134 155.6" stroke="#666" stroke-width="1.4"/>
<path d="M174 118.5 Q180 118 182 123 L170 163 Q166 170 153 169.5 L151 157 Q160 132 174 118.5 Z" fill="url(#tg4)"/>
<path d="M160 150 L166 134" stroke="#e8e8e8" stroke-width="1" stroke-dasharray="1 3"/>
<path d="M53 147 L61 146.5 L100 157 L151 166 L153 169.5 L101 167.5 Z" fill="#5f615f"/>
<path d="M62 148.5 L98 161 M72 149.8 L106 162 M98 163.5 L148 167.5" stroke="#a7a9a6" stroke-width="0.9"/>
<path d="M93 147 L96 158 L101 167.5 L120 166 L100 157 Z" fill="#8a8c89"/>
<text x="17.5" y="188" font-family="Liberation Sans, sans-serif" font-weight="bold" font-size="6.3" fill="#5c64a2" textLength="195.5" lengthAdjust="spacingAndGlyphs">Fast Scanning, Huge Performance, Space-Saving Desigr</text>
</svg>
<svg class="a" style="left:1331px;top:431.4px;" width="16" height="16" viewBox="0 0 16 16"><circle cx="8" cy="8" r="7.2" fill="#4d4d4d"/><path d="M5.2 5.2 L10.8 10.8 M10.8 5.2 L5.2 10.8" stroke="#fff" stroke-width="2" stroke-linecap="round"/></svg>
<svg class="a" style="left:2px;top:644px;" width="17" height="17" viewBox="0 0 17 17"><path d="M4.6 0.8 H14 L12.8 15 H2.8 Z" fill="#d3e5fb" stroke="#4a8ad6" stroke-width="1"/><path d="M6 2 H12.6 L11.8 12.4 H5 Z" fill="#c2dafa"/><path d="M13.5 0.8 Q16.4 0.8 16 3.2 Q15.7 5 13.7 4.8" fill="#e8f2fe" stroke="#4a8ad6" stroke-width="1"/><path d="M0.9 13.6 Q0.7 15.7 3 15.7 H11.2 V12.9 H2 Q0.9 12.9 0.9 13.6 Z" fill="#fff" stroke="#3b75c4" stroke-width="1"/></svg>
<svg class="a" style="left:1150px;top:641.7px;" width="16" height="17" viewBox="0 0 16 17"><rect x="1" y="2.5" width="11" height="13" rx="1" fill="#c98a3a" stroke="#8e5a1c" stroke-width="0.8"/><rect x="4" y="1" width="5" height="3" rx="0.8" fill="#9a9a9a"/><path d="M6 6 H12.5 L15 8.5 V16 H6 Z" fill="#fff" stroke="#a9a9a9" stroke-width="0.8"/></svg>
<div class="t" style="left:1167.0px;top:641px;font-size:11.5px;color:#505050;">0</div>
<svg class="a" style="left:1186px;top:641.7px;" width="16" height="17" viewBox="0 0 16 17"><path d="M2.5 1.5 H10 L13.5 5 V15 H2.5 Z" fill="#fff" stroke="#a9a9a9" stroke-width="0.9"/><rect x="7" y="10" width="7.5" height="6" rx="0.8" fill="#e9a92d" stroke="#a87412" stroke-width="0.7"/><path d="M8.6 10 V8.4 Q8.6 6.4 10.75 6.4 Q12.9 6.4 12.9 8.4 V10" fill="none" stroke="#8a8a8a" stroke-width="1.1"/></svg>
<div class="t" style="left:1202.0px;top:641px;font-size:11.5px;color:#505050;">1</div>
<svg class="a" style="left:1222px;top:641.7px;" width="16" height="17" viewBox="0 0 16 17"><rect x="1" y="1.5" width="13.5" height="14" fill="#eef5ff" stroke="#3f7fd6" stroke-width="1.1"/><rect x="2.4" y="11.5" width="10.6" height="2.6" fill="#7dbbf3"/><path d="M4 12.5 L5 9 L11.5 2.2 L14 4.4 L7.6 11.3 Z" fill="#f2b33d" stroke="#b97a1a" stroke-width="0.7"/><path d="M4 12.5 L5 9 L7.6 11.3 Z" fill="#f7e2b8"/></svg>
<div class="t" style="left:1238.5px;top:641px;font-size:11.5px;color:#505050;letter-spacing:-0.65px;">12</div>
<svg class="a" style="left:1257px;top:644px;" width="16" height="13" viewBox="0 0 16 13"><rect x="0.8" y="0.8" width="14.4" height="10.6" fill="#eaf3fe" stroke="#4a86d4" stroke-width="1.1"/><path d="M1 1 L8 7.2 L15 1" fill="none" stroke="#4a86d4" stroke-width="1.1"/></svg>
<div class="t" style="left:1273.0px;top:641px;font-size:11.5px;color:#505050;">1</div>
<svg class="a" style="left:1294px;top:641.7px;" width="16" height="17" viewBox="0 0 16 17"><rect x="1" y="2" width="14" height="13.5" fill="#fff" stroke="#5b8bd6" stroke-width="1.1"/><rect x="2.2" y="3.2" width="11.6" height="3" fill="#f58a3c"/><rect x="3" y="7.6" width="2.8" height="2.4" fill="#bcd3ee"/><rect x="6.8" y="7.6" width="2.8" height="2.4" fill="#9fd08a"/><rect x="10.4" y="7.6" width="2.8" height="2.4" fill="#bcd3ee"/><rect x="3" y="11.2" width="2.8" height="2.4" fill="#bcd3ee"/><rect x="6.8" y="11.2" width="2.8" height="2.4" fill="#f5d13c"/></svg>
<div class="t" style="left:1310.5px;top:641px;font-size:11.5px;color:#505050;">0</div>
<svg class="a" style="left:1329px;top:641.7px;" width="17" height="17" viewBox="0 0 17 17"><circle cx="8.5" cy="8.5" r="5.6" fill="none" stroke="#a5a5a5" stroke-width="3.4" stroke-dasharray="2.3 2.1"/><circle cx="8.5" cy="8.5" r="4.6" fill="#c9c9c9" stroke="#999" stroke-width="0.8"/><circle cx="8.5" cy="8.5" r="2" fill="#e4e4e4" stroke="#8e8e8e" stroke-width="0.7"/></svg>
<div class="t" style="left:1345.5px;top:641px;font-size:11.5px;color:#505050;">0</div>
</body></html>
